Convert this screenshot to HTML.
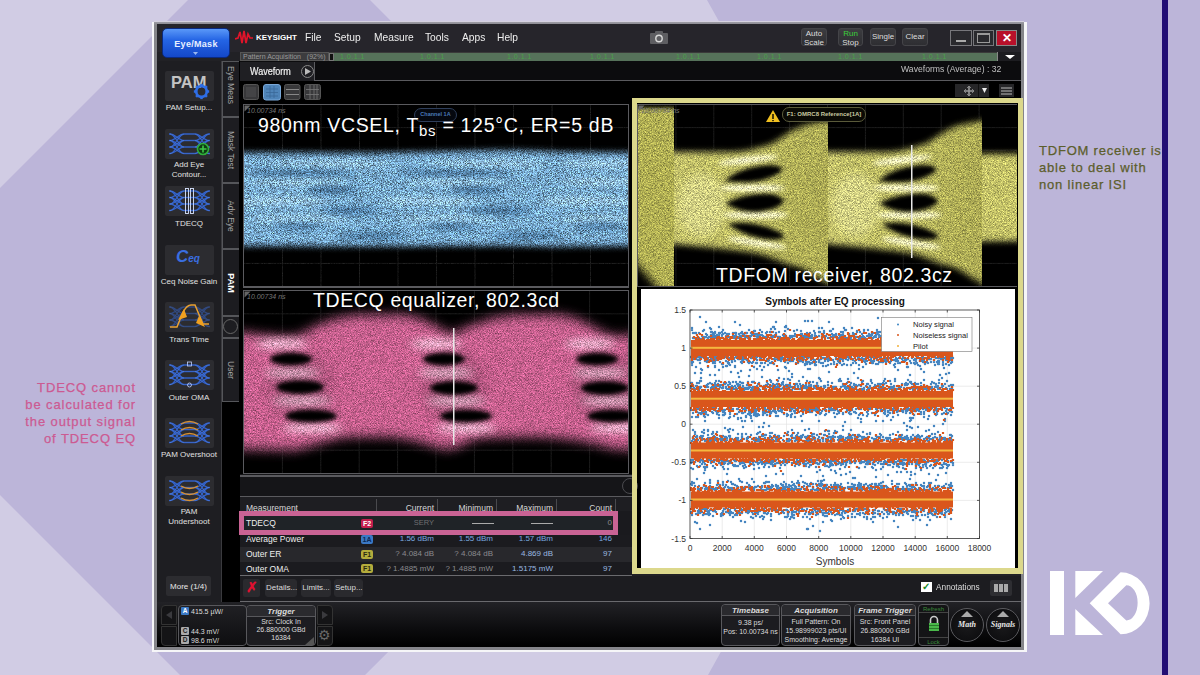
<!DOCTYPE html>
<html><head><meta charset="utf-8">
<style>
*{margin:0;padding:0;box-sizing:border-box}
html,body{width:1200px;height:675px;overflow:hidden;background:#bcb5d9;font-family:"Liberation Sans",sans-serif}
.a{position:absolute}
.t{position:absolute;white-space:nowrap;line-height:1}
.sx{display:inline-block;transform-origin:0 0}
.ib{position:absolute;left:165px;width:49px;height:30px;background:#2c2c30;border-radius:2px}
.lbl{position:absolute;left:157px;width:64px;text-align:center;color:#e0e0e0;font-size:8px;line-height:10px;white-space:nowrap}
.btn{position:absolute;background:linear-gradient(#3c3c40,#2e2e32);border-radius:3px;border:1px solid #444448;color:#ddd;font-size:8px;text-align:center;line-height:9px}
.vt{position:absolute;left:222px;width:17px;border:1px solid #55565a;border-right:none;background:#1d1d21}
.vtx{position:absolute;left:50%;top:50%;transform:translate(-50%,-50%) rotate(90deg);color:#a4a4a4;font-size:8.5px;white-space:nowrap}
.cell{position:absolute;font-size:9px;color:#e0e0e0;white-space:nowrap;line-height:1}
.badge{position:absolute;width:12px;height:9px;border-radius:2px;font-size:7px;font-weight:bold;text-align:center;line-height:9px}
.sp{position:absolute;background:#1c1c20;border:1px solid #58585c;border-radius:4px;color:#ddd;font-size:7px;text-align:center}
.sph{height:11px;border-bottom:1px solid #58585c;font-style:italic;font-weight:bold;font-size:8px;line-height:11px;color:#ddd;background:#2a2a2e;border-radius:4px 4px 0 0}
</style></head><body>
<svg class="a" style="left:0;top:0" width="1200" height="675" viewBox="0 0 1200 675">
  <rect width="1200" height="675" fill="#bcb5d9"/>
  <polygon points="0,0 188,0 0,188" fill="#d1cce4"/>
  <polygon points="0,675 180,675 0,495" fill="#d1cce4"/>
  <polygon points="370,0 707,0 896,337 708,675 365,675 705,336" fill="#d1cce4"/>
  <rect x="1162" y="0" width="6" height="675" fill="#220e74"/>
</svg>

<!-- window frame -->
<div class="a" style="left:152px;top:22px;width:875px;height:630px;background:#f6f6f8"></div>
<div class="a" style="left:154px;top:21px;width:870px;height:2px;background:#d6d2e0"></div>
<div class="a" style="left:154px;top:22px;width:870px;height:628px;background:linear-gradient(#9e9ca6,#85858a 3px)"></div>
<div class="a" style="left:157px;top:24px;width:864px;height:623px;background:#212125"></div>
<div class="a" style="left:157px;top:24px;width:864px;height:28px;background:#26252b"></div>
<!-- top bar -->
<div class="a" style="left:162px;top:28px;width:68px;height:30px;border-radius:5px;background:linear-gradient(#5a98f8,#2464e4 40%,#1448c8);border:1px solid #0a2a80"></div>
<div class="t" style="left:162px;top:40px;width:68px;text-align:center;color:#e8f0ff;font-size:9px;font-weight:bold;letter-spacing:0.3px">Eye/Mask</div><svg class="a" style="left:193px;top:52px" width="5" height="3"><polygon points="0,0 5,0 2.5,3" fill="#9ab8f0"/></svg>

<svg class="a" style="left:235px;top:30px" width="18" height="15" viewBox="0 0 18 15"><polyline points="0,9 3,8 5,2 7,13 9,1 11,13 13,4 15,8 18,8" fill="none" stroke="#e0142a" stroke-width="1.7"/></svg>
<div class="t" style="left:256px;top:34px;color:#fff;font-size:8px;font-weight:bold">KEYSIGHT</div>
<div class="t" style="left:305px;top:32px;color:#eee;font-size:11px"><span class="sx" style="transform:scaleX(0.93)">File</span></div>
<div class="t" style="left:334px;top:32px;color:#eee;font-size:11px"><span class="sx" style="transform:scaleX(0.93)">Setup</span></div>
<div class="t" style="left:374px;top:32px;color:#eee;font-size:11px"><span class="sx" style="transform:scaleX(0.93)">Measure</span></div>
<div class="t" style="left:425px;top:32px;color:#eee;font-size:11px"><span class="sx" style="transform:scaleX(0.93)">Tools</span></div>
<div class="t" style="left:462px;top:32px;color:#eee;font-size:11px"><span class="sx" style="transform:scaleX(0.93)">Apps</span></div>
<div class="t" style="left:497px;top:32px;color:#eee;font-size:11px"><span class="sx" style="transform:scaleX(0.93)">Help</span></div>

<svg class="a" style="left:649px;top:29px" width="20" height="16" viewBox="0 0 20 16"><rect x="1" y="4" width="18" height="11" rx="1" fill="#5e5e62"/><rect x="6" y="2" width="8" height="3" rx="1" fill="#5e5e62"/><circle cx="10" cy="9.5" r="3.2" fill="none" stroke="#d8d8d8" stroke-width="1.4"/></svg>

<div class="btn" style="left:801px;top:28px;width:26px;height:18px">Auto<br>Scale</div>
<div class="btn" style="left:838px;top:28px;width:25px;height:18px"><span style="color:#3ad23a">Run</span><br>Stop</div>
<div class="btn" style="left:870px;top:28px;width:26px;height:18px;line-height:16px">Single</div>
<div class="btn" style="left:902px;top:28px;width:26px;height:18px;line-height:16px">Clear</div>
<div class="a" style="left:950px;top:30px;width:22px;height:16px;border:1px solid #77777b;background:#2a2a2e"></div>
<div class="a" style="left:956px;top:40px;width:10px;height:2px;background:#aaa"></div>
<div class="a" style="left:973px;top:30px;width:21px;height:16px;border:1px solid #77777b;background:#2a2a2e"></div>
<div class="a" style="left:977px;top:33px;width:13px;height:10px;border:1px solid #999;border-top-width:2px"></div>
<div class="a" style="left:996px;top:30px;width:21px;height:16px;border:1px solid #888;background:#b8102a"></div>
<div class="t" style="left:996px;top:32px;width:21px;text-align:center;color:#fff;font-size:12px;font-weight:bold">✕</div>

<!-- pattern acquisition bar -->
<div class="a" style="left:240px;top:52px;width:781px;height:9px;background:#56725a;border-top:1px solid #3a3a3a"></div>
<div class="a" style="left:240px;top:52px;width:89px;height:9px;background:#3c3c3e;border:1px solid #555"></div>
<div class="a" style="left:329px;top:53px;width:5px;height:8px;background:#111;border:1px solid #777"></div>
<div class="t" style="left:243px;top:53px;color:#9a9a9a;font-size:7px">Pattern Acquisition&nbsp;&nbsp;&nbsp;(92%)</div>
<div class="t" style="left:340px;top:53px;color:#4aa04a;font-size:7px;letter-spacing:0.5px">1.0.1.1</div><div class="t" style="left:420px;top:53px;color:#4aa04a;font-size:7px;letter-spacing:0.5px">1.0.1.1</div><div class="t" style="left:507px;top:53px;color:#4aa04a;font-size:7px;letter-spacing:0.5px">1.0.1.1</div><div class="t" style="left:590px;top:53px;color:#4aa04a;font-size:7px;letter-spacing:0.5px">1.0.1.1</div><div class="t" style="left:676px;top:53px;color:#4aa04a;font-size:7px;letter-spacing:0.5px">1.0.1.1</div><div class="t" style="left:757px;top:53px;color:#4aa04a;font-size:7px;letter-spacing:0.5px">1.0.1.1</div><div class="t" style="left:838px;top:53px;color:#4aa04a;font-size:7px;letter-spacing:0.5px">1.0.1.1</div><div class="t" style="left:922px;top:53px;color:#4aa04a;font-size:7px;letter-spacing:0.5px">1.0.1.1</div>
<div class="a" style="left:997px;top:52px;width:24px;height:9px;background:#1c1c20;border-left:1px solid #888"></div>
<svg class="a" style="left:1005px;top:55px" width="10" height="4"><polygon points="0,0 10,0 5,4" fill="#fff"/></svg>
<!-- waveform tab row -->
<div class="a" style="left:240px;top:61px;width:781px;height:20px;background:#0c0c0e"></div>
<div class="a" style="left:240px;top:80px;width:781px;height:1px;background:#5a5a5e"></div>
<div class="a" style="left:240px;top:62px;width:75px;height:19px;background:#1f1f23;border-right:1px solid #5a5a5e"></div>
<div class="t" style="left:250px;top:67px;color:#f0f0f0;font-size:10px;-webkit-text-stroke:0.2px #f0f0f0"><span class="sx" style="transform:scaleX(0.9)">Waveform</span></div>
<div class="a" style="left:301px;top:65px;width:13px;height:13px;border-radius:50%;border:1px solid #888"></div>
<svg class="a" style="left:305px;top:68px" width="6" height="7"><polygon points="0,0 6,3.5 0,7" fill="#bbb"/></svg>
<div class="t" style="left:901px;top:65px;color:#c0c0c0;font-size:9px"><span class="sx" style="transform:scaleX(0.96)">Waveforms (Average) : 32</span></div>

<!-- toolbar row -->
<div class="a" style="left:240px;top:81px;width:781px;height:20px;background:#000"></div>
<svg class="a" style="left:242px;top:83px" width="80" height="18" viewBox="242 83 80 18">
 <rect x="243.5" y="84.5" width="15" height="15" rx="2" fill="#38383a" stroke="#555" stroke-width="1"/>
 <rect x="246" y="87" width="10" height="10" fill="#444446"/>
 <rect x="263.5" y="84.5" width="17" height="15.5" rx="2.5" fill="#4f84b8" stroke="#7aa8d8" stroke-width="1"/>
 <path d="M266 89H278M266 92.5H278M266 96H278M270 86V98M274 86V98" stroke="#3a6898" stroke-width="0.8"/>
 <rect x="284.5" y="84.5" width="15.5" height="15" rx="2" fill="#38383a" stroke="#555" stroke-width="1"/>
 <path d="M286 89.5H299M286 94.5H299" stroke="#888" stroke-width="1"/>
 <rect x="304.5" y="84.5" width="16" height="15" rx="2" fill="#38383a" stroke="#555" stroke-width="1"/>
 <path d="M306 89.5H319M306 94.5H319M310 85V99M314 85V99M317 85V99" stroke="#777" stroke-width="0.8"/>
</svg>
<svg class="a" style="left:954px;top:83px" width="62" height="15" viewBox="954 83 62 15">
 <rect x="955" y="84" width="34" height="13" fill="#262628"/>
 <line x1="978.5" y1="84" x2="978.5" y2="97" stroke="#111" stroke-width="1"/>
 <path d="M969 86.5V95.5M964.5 91H973.5" stroke="#999" stroke-width="1.6"/><path d="M967 88l2-2 2 2M967 94l2 2 2-2M966 89l-2 2 2 2M972 89l2 2-2 2" stroke="#999" stroke-width="0.8" fill="none"/>
 <polygon points="982,88 987,88 984.5,93" fill="#eee"/>
 <rect x="999" y="84" width="15" height="13" fill="#262628"/>
 <path d="M1001 88H1012M1001 91H1012M1001 94H1012" stroke="#bbb" stroke-width="1"/>
</svg>
<!-- left sidebar -->
<div class="a" style="left:157px;top:61px;width:65px;height:541px;background:#1e1e22;border-right:1px solid #3a3a3e"></div>
<div class="ib" style="top:71px"></div>
<div class="t" style="left:171px;top:74px;color:#c4c4c4;font-size:16.5px;font-weight:bold">PAM</div>
<div class="lbl" style="top:103px">PAM Setup...</div>
<div class="ib" style="top:129px"></div>
<div class="lbl" style="top:160px">Add Eye<br>Contour...</div>
<div class="ib" style="top:186px"></div>
<div class="lbl" style="top:219px">TDECQ</div>
<div class="ib" style="top:245px"></div>
<div class="t" style="left:176px;top:248px;color:#3a6ee0;font-size:17px;font-weight:bold;font-style:italic">C<span style="font-size:10px">eq</span></div>
<div class="lbl" style="top:277px">Ceq Noise Gain</div>
<div class="ib" style="top:302px"></div>
<div class="lbl" style="top:335px">Trans Time</div>
<div class="ib" style="top:360px"></div>
<div class="lbl" style="top:393px">Outer OMA</div>
<div class="ib" style="top:418px"></div>
<div class="lbl" style="top:450px">PAM Overshoot</div>
<div class="ib" style="top:476px"></div>
<div class="lbl" style="top:507px">PAM<br>Undershoot</div>
<div class="a" style="left:166px;top:576px;width:45px;height:20px;background:#2c2c30;border-radius:2px"></div>
<div class="t" style="left:166px;top:583px;width:45px;text-align:center;color:#e8e8e8;font-size:8px">More (1/4)</div>

<!-- vertical tabs column -->
<div class="a" style="left:222px;top:61px;width:18px;height:541px;background:#000"></div>
<div class="vt" style="top:61px;height:56px"><div class="vtx" style="top:42%">Eye Meas</div></div>
<div class="vt" style="top:117px;height:66px"><div class="vtx">Mask Test</div></div>
<div class="vt" style="top:183px;height:66px"><div class="vtx">Adv Eye</div></div>
<div class="vt" style="top:249px;height:67px;background:#1c1c20"><div class="vtx" style="color:#fff;font-weight:bold;font-size:9px">PAM</div></div>
<div class="vt" style="top:316px;height:22px"></div>
<div class="a" style="left:223px;top:319px;width:15px;height:15px;border-radius:50%;border:1px solid #666"></div>
<div class="vt" style="top:338px;height:64px"><div class="vtx">User</div></div>

<!-- panel frames -->
<div class="a" style="left:240px;top:101px;width:392px;height:374px;background:#000"></div>
<div class="a" style="left:243px;top:104px;width:386px;height:184px;border:1px solid #5a5a5e;border-bottom-width:2px;background:#000"></div>
<div class="a" style="left:243px;top:290px;width:386px;height:184px;border:1px solid #5a5a5e;background:#000"></div>
<div class="a" style="left:632px;top:98px;width:391px;height:476px;background:#dcd88c"></div>
<div class="a" style="left:637px;top:103px;width:381px;height:465px;background:#000"></div>
<div class="a" style="left:637px;top:104px;width:380px;height:183px;border:1px solid #5a5a5e"></div>

<svg class="a" style="left:0;top:0" width="0" height="0">
 <defs>
  <g id="eyeic"><path d="M5.0 5.0C10.0 5.0 14.0 11.5 19.0 11.5M5.0 5.0C10.0 5.0 14.0 18.0 19.0 18.0M5.0 11.5C10.0 11.5 14.0 5.0 19.0 5.0M5.0 11.5C10.0 11.5 14.0 18.0 19.0 18.0M5.0 11.5C10.0 11.5 14.0 24.5 19.0 24.5M5.0 18.0C10.0 18.0 14.0 5.0 19.0 5.0M5.0 18.0C10.0 18.0 14.0 11.5 19.0 11.5M5.0 18.0C10.0 18.0 14.0 24.5 19.0 24.5M5.0 24.5C10.0 24.5 14.0 11.5 19.0 11.5M5.0 24.5C10.0 24.5 14.0 18.0 19.0 18.0M30.0 5.0C35.0 5.0 39.0 11.5 44.0 11.5M30.0 5.0C35.0 5.0 39.0 18.0 44.0 18.0M30.0 11.5C35.0 11.5 39.0 5.0 44.0 5.0M30.0 11.5C35.0 11.5 39.0 18.0 44.0 18.0M30.0 11.5C35.0 11.5 39.0 24.5 44.0 24.5M30.0 18.0C35.0 18.0 39.0 5.0 44.0 5.0M30.0 18.0C35.0 18.0 39.0 11.5 44.0 11.5M30.0 18.0C35.0 18.0 39.0 24.5 44.0 24.5M30.0 24.5C35.0 24.5 39.0 11.5 44.0 11.5M30.0 24.5C35.0 24.5 39.0 18.0 44.0 18.0M4 5.0H6M19 5.0H30M44 5.0H45M4 11.5H6M19 11.5H30M44 11.5H45M4 18.0H6M19 18.0H30M44 18.0H45M4 24.5H6M19 24.5H30M44 24.5H45" fill="none" stroke="#2858c8" stroke-width="1.3" opacity="0.9"/><path d="M5.0 5.0C10.0 5.0 14.0 11.5 19.0 11.5M5.0 5.0C10.0 5.0 14.0 18.0 19.0 18.0M5.0 11.5C10.0 11.5 14.0 5.0 19.0 5.0M5.0 11.5C10.0 11.5 14.0 18.0 19.0 18.0M5.0 11.5C10.0 11.5 14.0 24.5 19.0 24.5M5.0 18.0C10.0 18.0 14.0 5.0 19.0 5.0M5.0 18.0C10.0 18.0 14.0 11.5 19.0 11.5M5.0 18.0C10.0 18.0 14.0 24.5 19.0 24.5M5.0 24.5C10.0 24.5 14.0 11.5 19.0 11.5M5.0 24.5C10.0 24.5 14.0 18.0 19.0 18.0M30.0 5.0C35.0 5.0 39.0 11.5 44.0 11.5M30.0 5.0C35.0 5.0 39.0 18.0 44.0 18.0M30.0 11.5C35.0 11.5 39.0 5.0 44.0 5.0M30.0 11.5C35.0 11.5 39.0 18.0 44.0 18.0M30.0 11.5C35.0 11.5 39.0 24.5 44.0 24.5M30.0 18.0C35.0 18.0 39.0 5.0 44.0 5.0M30.0 18.0C35.0 18.0 39.0 11.5 44.0 11.5M30.0 18.0C35.0 18.0 39.0 24.5 44.0 24.5M30.0 24.5C35.0 24.5 39.0 11.5 44.0 11.5M30.0 24.5C35.0 24.5 39.0 18.0 44.0 18.0M4 5.0H6M19 5.0H30M44 5.0H45M4 11.5H6M19 11.5H30M44 11.5H45M4 18.0H6M19 18.0H30M44 18.0H45M4 24.5H6M19 24.5H30M44 24.5H45" fill="none" stroke="#6fa4ff" stroke-width="0.45" opacity="0.5"/></g>
 </defs>
</svg>
<!-- PAM setup icon -->
<svg class="a" style="left:193px;top:83px" width="17" height="17" viewBox="0 0 20 20">
 <g transform="translate(10 10)">
  <circle r="6.2" fill="none" stroke="#2f6ee6" stroke-width="3.2"/>
  <g fill="#2f6ee6"><rect x="-1.5" y="-9" width="3" height="3"/><rect x="-1.5" y="6" width="3" height="3"/><rect x="-9" y="-1.5" width="3" height="3"/><rect x="6" y="-1.5" width="3" height="3"/>
  <rect x="-1.5" y="-9" width="3" height="3" transform="rotate(45)"/><rect x="-1.5" y="6" width="3" height="3" transform="rotate(45)"/><rect x="-9" y="-1.5" width="3" height="3" transform="rotate(45)"/><rect x="6" y="-1.5" width="3" height="3" transform="rotate(45)"/></g>
 </g>
</svg>
<!-- add eye contour -->
<svg class="a" style="left:165px;top:129px" width="49" height="30" viewBox="0 0 49 30"><use href="#eyeic"/><circle cx="38" cy="20" r="5.5" fill="#0e3a12" stroke="#2fae3a" stroke-width="1.6"/><path d="M38 16.5v7M34.5 20h7" stroke="#3cc848" stroke-width="1.6"/></svg>
<!-- TDECQ -->
<svg class="a" style="left:165px;top:186px" width="49" height="30" viewBox="0 0 49 30"><use href="#eyeic"/><rect x="20.5" y="2.5" width="3" height="25" fill="none" stroke="#d8e4ff" stroke-width="0.9"/><rect x="25.5" y="2.5" width="3" height="25" fill="none" stroke="#d8e4ff" stroke-width="0.9"/></svg>
<!-- Trans time -->
<svg class="a" style="left:165px;top:302px" width="49" height="30" viewBox="0 0 49 30"><use href="#eyeic" opacity="0.5"/><path d="M5 25 H12 L18 10 Q22 3 26 3 H30 L38 22 H44" fill="none" stroke="#e8a030" stroke-width="1.5"/><path d="M13 18 L19 7 L22 15 Z" fill="#f0a020"/><path d="M34 14 L40 25 L31 21 Z" fill="#f0a020"/></svg>
<!-- Outer OMA -->
<svg class="a" style="left:165px;top:360px" width="49" height="30" viewBox="0 0 49 30"><use href="#eyeic"/><rect x="22.5" y="2" width="4" height="4" fill="none" stroke="#c0d0ff" stroke-width="0.8"/><circle cx="24.5" cy="25" r="2" fill="none" stroke="#c0d0ff" stroke-width="0.8"/></svg>
<!-- PAM overshoot -->
<svg class="a" style="left:165px;top:418px" width="49" height="30" viewBox="0 0 49 30"><use href="#eyeic"/><path d="M16 6 Q24.5 1 33 6 M16 12 Q24.5 7 33 12 M16 18 Q24.5 13 33 18" fill="none" stroke="#d89030" stroke-width="1.3"/></svg>
<!-- PAM undershoot -->
<svg class="a" style="left:165px;top:476px" width="49" height="30" viewBox="0 0 49 30"><use href="#eyeic"/><path d="M16 10 Q24.5 15 33 10 M16 16 Q24.5 21 33 16 M16 22 Q24.5 27 33 22" fill="none" stroke="#d89030" stroke-width="1.3"/></svg>
<svg class="a" style="left:0;top:0" width="0" height="0">
<defs>
 <filter id="gr" x="0" y="0" width="1" height="1" color-interpolation-filters="sRGB">
  <feTurbulence type="fractalNoise" baseFrequency="1.4" numOctaves="1" seed="5" result="t"/>
  <feColorMatrix in="t" type="matrix" values="1 0 0 0 0 1 0 0 0 0 1 0 0 0 0 0 0 0 0 1" result="g0"/>
  <feGaussianBlur in="g0" stdDeviation="0.5" result="g"/>
  <feComposite in="SourceGraphic" in2="g" operator="arithmetic" k1="2.2" k2="-0.1" k3="0" k4="0"/>
 </filter>
 <filter id="gr2" x="0" y="0" width="1" height="1" color-interpolation-filters="sRGB">
  <feTurbulence type="fractalNoise" baseFrequency="1.4" numOctaves="1" seed="7" result="t"/>
  <feColorMatrix in="t" type="matrix" values="1 0 0 0 0 1 0 0 0 0 1 0 0 0 0 0 0 0 0 1" result="g0"/>
  <feGaussianBlur in="g0" stdDeviation="0.5" result="g"/>
  <feComposite in="SourceGraphic" in2="g" operator="arithmetic" k1="1.3" k2="0.35" k3="0" k4="0"/>
 </filter>
 <filter id="b6" x="-20%" y="-50%" width="140%" height="200%"><feGaussianBlur stdDeviation="6"/></filter>
 <filter id="b2" x="-20%" y="-20%" width="140%" height="140%"><feGaussianBlur stdDeviation="2"/></filter>
 <filter id="b5" x="-20%" y="-40%" width="140%" height="180%"><feGaussianBlur stdDeviation="4.5"/></filter>
 <filter id="b4" x="-50%" y="-50%" width="200%" height="200%"><feGaussianBlur stdDeviation="4"/></filter>
 <filter id="b3" x="-50%" y="-50%" width="200%" height="200%"><feGaussianBlur stdDeviation="3"/></filter>
 <filter id="b25" x="-50%" y="-80%" width="200%" height="260%"><feGaussianBlur stdDeviation="2.3"/></filter>
</defs>
</svg>

<!-- BLUE EYE -->
<svg class="a" style="left:244px;top:105px" width="384" height="181" viewBox="244 105 384 181">
 <g filter="url(#gr)">
  <rect x="244" y="105" width="385" height="181" fill="#000"/><path d="M282.5 105V286M321.0 105V286M359.5 105V286M398.0 105V286M436.5 105V286M475.0 105V286M513.5 105V286M552.0 105V286M590.5 105V286M244 127.6H629M244 150.2H629M244 172.9H629M244 195.5H629M244 218.1H629M244 240.8H629M244 263.4H629" stroke="#1a1a1a" stroke-width="1" fill="none"/>
  <g filter="url(#b3)">
   <path d="M220 153 C300 152 360 154 420 152 C470 151 500 149 540 151 C580 153 610 152 660 153 L660 246 C600 246 560 247 520 246 C460 245 400 247 300 246 L220 246 Z" fill="#74a6cc"/>
  </g>
  <g filter="url(#b3)" fill="#b8dcf2" opacity="0.55">
   <ellipse cx="330" cy="164" rx="60" ry="3"/><ellipse cx="485" cy="164" rx="60" ry="3"/><ellipse cx="600" cy="164" rx="40" ry="3"/>
   <ellipse cx="300" cy="182" rx="50" ry="3"/><ellipse cx="455" cy="182" rx="50" ry="3"/><ellipse cx="600" cy="182" rx="40" ry="3"/>
   <ellipse cx="280" cy="201" rx="50" ry="3.5"/><ellipse cx="430" cy="201" rx="50" ry="3.5"/><ellipse cx="590" cy="201" rx="50" ry="3.5"/>
   <ellipse cx="300" cy="219" rx="50" ry="3"/><ellipse cx="450" cy="219" rx="50" ry="3"/><ellipse cx="600" cy="219" rx="40" ry="3"/>
  </g>
  <g filter="url(#b3)" fill="#1e4468" opacity="0.7">
   <ellipse cx="300" cy="173" rx="55" ry="2.5"/><ellipse cx="455" cy="173" rx="55" ry="2.5"/>
   <ellipse cx="332" cy="190" rx="26" ry="3"/><ellipse cx="477" cy="190" rx="26" ry="3"/>
   <ellipse cx="350" cy="211" rx="28" ry="3"/><ellipse cx="500" cy="211" rx="32" ry="3"/>
   <ellipse cx="298" cy="226" rx="26" ry="2.5"/><ellipse cx="452" cy="226" rx="26" ry="2.5"/><ellipse cx="600" cy="226" rx="26" ry="2.5"/>
   <ellipse cx="372" cy="236" rx="34" ry="2.5"/><ellipse cx="527" cy="236" rx="34" ry="2.5"/>
  </g>
 </g>
</svg>

<!-- PINK EYE -->
<svg class="a" style="left:244px;top:291px" width="384" height="182" viewBox="244 291 384 182">
 <g filter="url(#gr2)">
  <rect x="244" y="291" width="384" height="182" fill="#000"/><path d="M282.4 291V473M320.8 291V473M359.2 291V473M397.6 291V473M436.0 291V473M474.4 291V473M512.8 291V473M551.2 291V473M589.6 291V473M244 313.8H628M244 336.5H628M244 359.2H628M244 382.0H628M244 404.8H628M244 427.5H628M244 450.2H628" stroke="#1a1a1a" stroke-width="1" fill="none"/>
  <g filter="url(#b6)">
   <path d="M220 332 C255 332 275 338 298 336 C318 324 335 316 360 315 L400 315 C425 316 440 330 452 334 C470 326 490 316 520 315 L560 315 C585 318 600 334 615 336 C625 336 640 334 660 334 L660 450 C630 450 612 450 600 445 C580 440 560 437 520 437 L480 438 C468 440 458 450 445 449 C430 446 420 440 390 437 L350 437 C330 438 315 446 295 450 C270 450 250 449 220 449 Z" fill="#c6608e"/>
  </g>
  <g filter="url(#b4)" fill="#f6cce0" opacity="1">
   <ellipse cx="282" cy="344" rx="26" ry="4"/>
   <ellipse cx="292" cy="373" rx="28" ry="4"/>
   <ellipse cx="302" cy="401" rx="30" ry="4"/>
   <ellipse cx="312" cy="428" rx="30" ry="4"/>
   <ellipse cx="436" cy="344" rx="26" ry="4"/>
   <ellipse cx="446" cy="373" rx="28" ry="4"/>
   <ellipse cx="456" cy="401" rx="30" ry="4"/>
   <ellipse cx="466" cy="428" rx="30" ry="4"/>
   <ellipse cx="590" cy="344" rx="26" ry="4"/>
   <ellipse cx="600" cy="373" rx="28" ry="4"/>
   <ellipse cx="610" cy="401" rx="30" ry="4"/>
   <ellipse cx="620" cy="428" rx="30" ry="4"/>
  </g>
  <g filter="url(#b6)" fill="#000" opacity="0.12">
   <ellipse cx="300" cy="387" rx="34" ry="36"/>
   <ellipse cx="454" cy="387" rx="34" ry="36"/>
   <ellipse cx="605" cy="387" rx="34" ry="36"/>
  </g>
  <g filter="url(#b25)" fill="#000">
   <ellipse cx="291" cy="359" rx="21" ry="6.5"/>
   <ellipse cx="300" cy="387" rx="24" ry="7"/>
   <ellipse cx="311" cy="416" rx="26" ry="6.5"/>
   <ellipse cx="444" cy="359" rx="21" ry="6.5"/>
   <ellipse cx="454" cy="388" rx="24" ry="7"/>
   <ellipse cx="466" cy="416" rx="26" ry="6.5"/>
   <ellipse cx="597" cy="359" rx="21" ry="6.5"/>
   <ellipse cx="605" cy="388" rx="24" ry="7"/>
   <ellipse cx="613" cy="416" rx="26" ry="6.5"/>
  </g>
 </g>
 <rect x="453" y="328" width="1.5" height="117" fill="#e8e8e8"/>
</svg>

<!-- YELLOW EYE -->
<svg class="a" style="left:638px;top:105px" width="379" height="181" viewBox="638 105 379 181">
 <defs>
  <linearGradient id="hg" x1="0" x2="1" y1="0" y2="0">
   <stop offset="0" stop-color="#c6c46e"/><stop offset="0.4" stop-color="#bcba62"/><stop offset="1" stop-color="#a8a650"/>
  </linearGradient>
  <clipPath id="hc"><rect x="674" y="100" width="154" height="190"/></clipPath>
  <g id="ygrp">
   <g clip-path="url(#hc)">
    <g filter="url(#b3)">
     <path d="M650 152 L735 152 C748 151 760 148 772 143.5 C780 139 785 135 790 132 C797 128 803 125.5 808 124.5 C815 123 820 122 827 121 L850 119 L850 295 L840 289 C828 284 818 278 805 269.5 C797 266 792 265 787.5 264 C780 261 776 259 772 258 C765 255 760 254 750 252 C735 250 710 247 650 241.5 Z" fill="url(#hg)"/>
    </g>
   </g>
   <g filter="url(#b25)" fill="#f8f6c8">
    <ellipse cx="748" cy="160" rx="30" ry="3.2" transform="rotate(-7 748 160)"/>
    <ellipse cx="752" cy="188" rx="33" ry="3.5"/>
    <ellipse cx="755" cy="215" rx="33" ry="3.5"/>
    <ellipse cx="757" cy="243" rx="30" ry="3.2" transform="rotate(9 757 243)"/>
   </g>
   <g filter="url(#b4)" fill="#e6e4a0" opacity="0.5">
    <ellipse cx="702" cy="205" rx="24" ry="32"/>
   </g>
   <g filter="url(#b2)" fill="#000">
    <path d="M724 181 Q742 166 770 165 Q786 166 781 172 Q760 186 724 181 Z"/>
    <path d="M725 203 Q748 192 772 194 Q786 198 783 203 Q776 210 756 212 Q738 212 725 203 Z"/>
    <path d="M728 224 Q745 220 770 228 Q786 234 784 238 Q770 242 752 236 Q738 232 728 224 Z"/>
   </g>
  </g>
 </defs>
 <g filter="url(#gr2)">
  <rect x="638" y="105" width="379" height="181" fill="#000"/><path d="M675.9 105V286M713.8 105V286M751.7 105V286M789.6 105V286M827.5 105V286M865.4 105V286M903.3 105V286M941.2 105V286M979.1 105V286M638 127.6H1017M638 150.2H1017M638 172.9H1017M638 195.5H1017M638 218.1H1017M638 240.8H1017M638 263.4H1017" stroke="#1a1a1a" stroke-width="1" fill="none"/>
  <g clip-path="url(#lc)">
   <g filter="url(#b2)">
    <rect x="620" y="108" width="70" height="190" fill="#b0ae52"/>
   </g>
   <g filter="url(#b4)"><polygon points="625,250 625,300 668,300" fill="#000"/></g>
  </g>
  <use href="#ygrp"/>
  <use href="#ygrp" transform="translate(154 0)"/>
  <g clip-path="url(#rc)">
   <g filter="url(#b3)">
    <rect x="970" y="154" width="60" height="87" fill="#c4c268"/>
   </g>
  </g>
 </g>
 <defs>
  <clipPath id="lc"><rect x="630" y="100" width="44" height="190"/></clipPath>
  <clipPath id="rc"><rect x="982" y="100" width="40" height="190"/></clipPath>
 </defs>
 <rect x="911" y="145" width="1.5" height="113" fill="#e8e8e8"/>
</svg>
<!-- PLOT -->
<svg class="a" style="left:641px;top:289px" width="374" height="279" viewBox="641 289 374 279">
 <defs><clipPath id="axc"><rect x="690" y="310" width="289.5" height="228.5"/></clipPath></defs>
 <rect x="641" y="289" width="374" height="279" fill="#fff"/>
 <path d="M722.2 310V538.5M754.3 310V538.5M786.5 310V538.5M818.7 310V538.5M850.8 310V538.5M883.0 310V538.5M915.2 310V538.5M947.3 310V538.5M690 348.1H979.5M690 386.2H979.5M690 424.2H979.5M690 462.3H979.5M690 500.4H979.5" stroke="#e4e4e4" stroke-width="0.7" fill="none"/>
 <g clip-path="url(#axc)">
  <path d="M887 337h0M845 339h0M717 336h0M878 332h0M905 358h0M808 358h0M947 360h0M898 337h0M874 337h0M830 359h0M822 334h0M812 338h0M851 365h0M785 367h0M854 336h0M694 338h0M858 359h0M793 359h0M933 338h0M942 332h0M886 359h0M759 335h0M734 338h0M896 359h0M808 321h0M771 329h0M723 338h0M895 364h0M826 366h0M696 338h0M763 336h0M873 333h0M776 333h0M853 360h0M953 358h0M852 328h0M741 362h0M720 362h0M870 335h0M788 338h0M833 360h0M920 360h0M747 333h0M741 371h0M762 370h0M700 317h0M803 362h0M711 359h0M694 359h0M851 359h0M701 357h0M740 325h0M776 322h0M829 372h0M815 335h0M857 332h0M700 360h0M725 333h0M872 333h0M872 361h0M692 365h0M815 364h0M766 333h0M941 359h0M880 332h0M951 337h0M908 359h0M917 363h0M719 333h0M702 336h0M723 334h0M890 326h0M938 358h0M824 331h0M712 360h0M798 363h0M889 358h0M700 363h0M876 364h0M900 363h0M877 359h0M713 338h0M806 363h0M948 337h0M693 338h0M764 367h0M921 338h0M803 337h0M878 360h0M922 361h0M945 358h0M793 358h0M947 337h0M823 337h0M775 359h0M692 362h0M751 333h0M804 357h0M825 361h0M809 357h0M705 361h0M738 359h0M815 338h0M934 334h0M700 358h0M807 337h0M910 331h0M738 358h0M789 360h0M850 337h0M728 363h0M770 363h0M775 329h0M941 338h0M780 358h0M912 336h0M939 332h0M756 363h0M832 337h0M873 338h0M713 333h0M741 333h0M750 336h0M845 338h0M746 336h0M726 361h0M816 365h0M730 359h0M785 338h0M816 336h0M856 363h0M713 363h0M866 357h0M806 361h0M815 360h0M805 365h0M786 360h0M920 339h0M836 335h0M711 332h0M866 364h0M786 368h0M839 362h0M726 336h0M744 358h0M834 362h0M894 365h0M757 334h0M938 361h0M839 357h0M950 359h0M881 358h0M833 335h0M907 367h0M843 359h0M866 358h0M706 334h0M942 328h0M888 336h0M742 361h0M698 360h0M877 332h0M701 357h0M777 357h0M830 331h0M838 361h0M901 338h0M746 333h0M743 336h0M738 357h0M828 361h0M835 337h0M804 359h0M828 365h0M905 359h0M844 358h0M729 337h0M843 332h0M931 336h0M735 367h0M911 331h0M876 357h0M803 336h0M794 336h0M853 363h0M740 338h0M749 363h0M757 357h0M785 359h0M917 337h0M703 357h0M729 334h0M780 337h0M792 358h0M872 357h0M845 330h0M695 373h0M909 337h0M732 337h0M726 337h0M692 363h0M843 337h0M822 336h0M727 366h0M692 363h0M779 339h0M808 358h0M727 337h0M892 335h0M714 359h0M717 358h0M845 337h0M790 358h0M787 357h0M692 361h0M754 331h0M707 335h0M915 338h0M874 361h0M755 334h0M952 336h0M848 338h0M810 363h0M718 360h0M768 365h0M715 363h0M943 362h0M839 338h0M771 337h0M843 361h0M767 332h0M803 357h0M906 338h0M914 363h0M794 359h0M773 332h0M903 335h0M913 337h0M716 337h0M714 357h0M910 336h0M860 339h0M715 333h0M740 336h0M710 375h0M936 358h0M870 338h0M729 358h0M875 336h0M891 336h0M887 359h0M713 337h0M934 339h0M848 360h0M843 335h0M903 358h0M714 335h0M928 337h0M948 338h0M708 358h0M805 338h0M921 358h0M865 362h0M735 337h0M704 337h0M824 332h0M821 357h0M784 358h0M942 358h0M923 335h0M837 364h0M706 337h0M871 337h0M900 337h0M767 339h0M767 360h0M907 364h0M697 357h0M934 362h0M733 336h0M876 335h0M799 361h0M916 361h0M813 362h0M720 339h0M784 337h0M869 336h0M841 358h0M943 364h0M775 335h0M801 334h0M727 334h0M885 358h0M804 337h0M818 357h0M755 331h0M732 361h0M754 367h0M885 334h0M703 337h0M755 336h0M706 358h0M819 360h0M752 335h0M819 332h0M921 369h0M843 338h0M887 360h0M737 338h0M701 339h0M824 358h0M951 363h0M879 357h0M708 360h0M856 337h0M782 357h0M931 335h0M725 357h0M790 380h0M775 357h0M931 362h0M891 361h0M804 339h0M929 359h0M748 362h0M898 361h0M810 337h0M948 337h0M949 357h0M715 332h0M862 359h0M885 361h0M774 327h0M696 339h0M760 360h0M896 361h0M764 359h0M735 361h0M842 337h0M897 359h0M746 337h0M857 337h0M936 336h0M903 361h0M751 336h0M889 333h0M763 357h0M859 357h0M831 337h0M699 357h0M854 334h0M743 360h0M791 361h0M938 364h0M728 337h0M775 336h0M947 358h0M949 334h0M946 364h0M936 333h0M788 338h0M849 334h0M707 360h0M728 358h0M865 362h0M779 332h0M758 334h0M891 331h0M930 359h0M922 336h0M877 360h0M731 359h0M920 361h0M768 361h0M738 337h0M728 358h0M920 360h0M745 359h0M696 359h0M811 360h0M950 332h0M884 331h0M926 339h0M829 335h0M909 333h0M876 364h0M749 361h0M864 361h0M924 334h0M814 331h0M808 362h0M726 366h0M788 360h0M732 361h0M777 359h0M810 338h0M806 338h0M786 326h0M785 331h0M827 359h0M736 335h0M747 360h0M865 362h0M839 335h0M841 332h0M893 336h0M799 359h0M883 362h0M750 338h0M872 335h0M904 338h0M933 331h0M949 365h0M904 330h0M698 339h0M815 336h0M785 362h0M715 366h0M793 357h0M891 335h0M774 337h0M699 338h0M807 358h0M883 338h0M731 372h0M744 334h0M849 334h0M949 373h0M937 362h0M735 333h0M722 364h0M838 360h0M708 367h0M891 329h0M873 363h0M946 333h0M853 359h0M938 323h0M822 338h0M768 360h0M815 365h0M902 334h0M934 337h0M762 363h0M799 361h0M723 364h0M821 363h0M883 335h0M771 332h0M707 362h0M826 336h0M735 336h0M810 369h0M722 332h0M757 338h0M777 357h0M832 334h0M700 359h0M872 334h0M837 338h0M904 338h0M713 337h0M739 359h0M862 334h0M851 337h0M882 362h0M916 359h0M944 336h0M692 330h0M776 336h0M860 338h0M713 362h0M864 332h0M707 359h0M887 361h0M951 357h0M728 357h0M876 337h0M923 336h0M804 359h0M800 360h0M845 337h0M815 336h0M712 336h0M945 328h0M747 360h0M859 339h0M779 338h0M910 337h0M934 334h0M720 333h0M699 333h0M805 364h0M878 364h0M862 358h0M742 363h0M896 337h0M891 358h0M879 337h0M851 339h0M735 366h0M869 335h0M891 357h0M915 359h0M734 359h0M712 332h0M739 334h0M935 337h0M812 363h0M715 367h0M890 358h0M824 333h0M895 338h0M769 358h0M704 338h0M841 336h0M698 337h0M722 335h0M742 332h0M812 335h0M874 357h0M949 335h0M816 362h0M819 361h0M846 338h0M888 338h0M944 338h0M717 338h0M833 329h0M850 338h0M829 322h0M935 365h0M952 327h0M767 359h0M730 365h0M735 322h0M899 337h0M750 362h0M851 336h0M905 361h0M719 327h0M809 357h0M701 373h0M790 361h0M918 358h0M799 358h0M760 366h0M917 357h0M807 358h0M870 360h0M718 339h0M807 364h0M902 338h0M797 359h0M849 336h0M939 362h0M786 339h0M802 357h0M783 335h0M722 337h0M805 335h0M863 336h0M909 339h0M947 358h0M862 337h0M801 361h0M743 334h0M782 359h0M831 337h0M729 363h0M716 358h0M711 335h0M890 358h0M792 337h0M695 358h0M923 362h0M936 337h0M893 338h0M743 359h0M819 362h0M754 357h0M787 360h0M706 322h0M728 362h0M944 368h0M844 328h0M756 358h0M774 359h0M823 366h0M943 357h0M953 336h0M790 338h0M913 337h0M798 357h0M881 336h0M717 335h0M878 334h0M904 334h0M833 360h0M853 359h0M836 336h0M853 335h0M797 330h0M760 357h0M782 358h0M943 362h0M951 358h0M935 337h0M863 359h0M846 330h0M744 358h0M879 362h0M862 358h0M819 328h0M842 359h0M886 362h0M741 337h0M904 332h0M774 364h0M922 357h0M885 357h0M810 364h0M757 369h0M869 335h0M735 338h0M788 329h0M843 334h0M937 362h0M924 338h0M779 337h0M806 336h0M864 330h0M757 338h0M794 331h0M775 361h0M799 358h0M880 362h0M858 358h0M807 333h0M804 336h0M918 365h0M898 334h0M823 334h0M716 360h0M791 361h0M947 337h0M732 359h0M784 339h0M900 336h0M799 361h0M898 370h0M939 358h0M834 364h0M704 358h0M903 337h0M757 336h0M915 364h0M950 338h0M902 337h0M723 367h0M893 338h0M814 360h0M855 338h0M893 334h0M760 330h0M871 357h0M842 365h0M693 333h0M778 360h0M703 331h0M761 363h0M923 359h0M759 337h0M928 363h0M790 336h0M901 332h0M692 328h0M842 359h0M831 331h0M723 330h0M710 328h0M760 335h0M919 337h0M840 359h0M751 358h0M745 338h0M935 357h0M760 359h0M713 360h0M768 336h0M947 357h0M772 362h0M812 321h0M926 358h0M742 359h0M907 359h0M898 334h0M801 331h0M872 334h0M896 358h0M696 367h0M937 338h0M811 336h0M738 338h0M695 333h0M846 359h0M869 357h0M785 335h0M741 336h0M733 333h0M840 339h0M855 361h0M805 321h0M907 333h0M802 338h0M695 358h0M711 329h0M918 357h0M745 336h0M702 370h0M764 337h0M713 361h0M900 357h0M788 363h0M922 334h0M946 360h0M745 333h0M822 328h0M694 357h0M797 357h0M786 327h0M931 359h0M878 318h0M899 358h0M852 336h0M928 338h0M924 334h0M737 337h0M712 338h0M877 330h0M851 357h0M905 360h0M752 358h0M691 357h0M859 360h0M910 361h0M923 357h0M735 366h0M821 359h0M864 338h0M872 363h0M697 338h0M853 360h0M783 335h0M736 357h0M853 333h0M743 357h0M761 338h0M894 360h0M692 358h0M835 335h0M729 334h0M921 331h0M927 362h0M826 358h0M939 338h0M912 335h0M910 337h0M939 361h0M921 358h0M778 337h0M780 360h0M917 335h0M868 330h0M833 336h0M748 338h0M852 359h0M909 336h0M860 338h0M934 357h0M802 334h0M770 332h0M900 337h0M772 338h0M791 359h0M708 338h0M864 337h0M834 337h0M715 338h0M734 358h0M903 357h0M846 338h0M940 358h0M895 367h0M719 335h0M943 359h0M908 359h0M753 362h0M752 363h0M844 364h0M713 361h0M767 359h0M771 335h0M900 329h0M934 360h0M925 337h0M765 337h0M793 361h0M831 364h0M872 361h0M921 329h0M762 332h0M720 333h0M844 364h0M860 359h0M757 363h0M820 332h0M896 360h0M857 331h0M863 367h0M800 361h0M875 336h0M890 333h0M823 358h0M867 336h0M816 337h0M724 358h0M866 361h0M944 335h0M792 336h0M932 336h0M710 337h0M943 337h0M952 362h0M867 361h0M934 322h0M839 338h0M933 339h0M807 336h0M749 330h0M864 359h0M916 363h0M761 358h0M840 336h0M753 357h0M944 337h0M850 357h0M715 337h0M923 333h0M811 358h0M716 357h0M829 360h0M906 338h0M914 360h0M915 333h0M772 363h0M696 333h0M721 338h0M836 358h0M948 358h0M698 357h0M951 360h0M902 359h0M869 334h0M828 338h0M749 339h0M891 361h0M848 357h0M814 362h0M712 335h0M890 363h0M849 358h0M754 358h0M924 335h0M716 360h0M811 360h0M808 337h0M951 332h0M836 334h0M938 363h0M909 335h0M767 337h0M815 333h0M810 333h0M769 360h0M795 336h0M942 359h0M774 359h0M952 359h0M935 337h0M782 358h0M773 336h0M732 362h0M801 360h0M871 338h0M939 364h0M809 362h0M741 338h0M833 337h0M840 363h0M883 338h0M736 333h0M920 334h0M791 361h0M719 370h0M893 335h0M715 361h0M781 361h0M797 359h0M823 363h0M800 338h0M949 361h0M912 358h0M757 360h0M808 336h0M871 362h0M917 337h0M914 336h0M894 336h0M853 360h0M815 336h0M770 357h0M836 335h0M742 357h0M947 336h0M888 337h0M830 358h0M693 362h0M785 327h0M912 358h0M859 360h0M860 332h0M880 358h0M939 361h0M714 333h0M887 334h0M895 333h0M884 360h0M788 358h0M841 335h0M712 338h0M925 363h0M796 363h0M819 336h0M754 358h0M920 366h0M709 337h0M910 361h0M798 359h0M916 336h0M906 360h0M869 336h0M891 337h0M792 374h0M839 360h0M762 377h0M762 335h0M783 359h0M803 337h0M716 336h0M795 334h0M790 337h0M829 358h0M753 334h0M924 360h0M789 371h0M903 336h0M911 363h0M773 327h0M729 364h0M925 364h0M808 369h0M835 335h0M765 363h0M859 365h0M848 339h0M950 326h0M935 339h0M787 338h0M898 363h0M942 338h0M718 360h0M876 358h0M863 339h0M704 330h0M740 359h0M836 359h0M846 338h0M812 359h0M812 336h0M859 369h0M877 334h0M908 367h0M803 357h0M937 335h0M871 359h0M865 338h0M879 335h0M730 338h0M713 336h0M717 389h0M841 387h0M817 385h0M754 389h0M756 409h0M878 384h0M752 412h0M855 386h0M924 380h0M748 389h0M778 389h0M774 411h0M700 381h0M880 388h0M730 384h0M710 410h0M839 412h0M803 387h0M756 413h0M884 381h0M754 409h0M944 413h0M795 385h0M819 421h0M807 381h0M885 411h0M819 378h0M843 384h0M817 408h0M709 409h0M813 410h0M789 389h0M815 409h0M925 389h0M770 387h0M861 386h0M867 390h0M715 375h0M825 386h0M866 386h0M770 410h0M844 386h0M705 414h0M950 390h0M838 411h0M937 387h0M802 411h0M751 411h0M738 373h0M939 383h0M713 408h0M946 388h0M771 382h0M724 412h0M767 382h0M791 417h0M818 389h0M837 414h0M810 411h0M911 382h0M753 390h0M752 388h0M788 385h0M760 390h0M799 412h0M717 386h0M908 384h0M709 410h0M851 409h0M747 385h0M915 409h0M776 416h0M749 385h0M855 388h0M915 383h0M749 413h0M895 381h0M701 409h0M801 388h0M815 408h0M768 409h0M763 415h0M738 386h0M765 409h0M694 410h0M936 408h0M708 387h0M927 389h0M936 415h0M854 412h0M810 386h0M938 410h0M936 386h0M836 409h0M773 390h0M783 388h0M706 414h0M691 410h0M758 414h0M749 411h0M824 409h0M782 410h0M905 385h0M811 385h0M923 389h0M912 412h0M723 387h0M831 408h0M756 414h0M886 389h0M912 384h0M806 385h0M778 381h0M723 415h0M845 386h0M825 387h0M731 388h0M921 383h0M710 408h0M845 388h0M943 365h0M911 420h0M801 387h0M784 390h0M787 388h0M714 385h0M868 384h0M800 408h0M945 419h0M786 409h0M910 421h0M833 409h0M892 389h0M892 388h0M946 357h0M730 417h0M791 410h0M693 385h0M765 388h0M705 413h0M883 387h0M945 384h0M706 386h0M693 385h0M828 389h0M754 412h0M843 413h0M756 416h0M876 413h0M947 409h0M810 389h0M893 388h0M777 388h0M725 384h0M759 410h0M952 389h0M848 410h0M845 388h0M781 410h0M872 413h0M743 386h0M934 412h0M721 385h0M906 411h0M870 409h0M734 389h0M769 426h0M748 414h0M917 410h0M908 410h0M926 389h0M699 413h0M762 370h0M769 409h0M766 410h0M835 387h0M810 409h0M745 389h0M947 414h0M745 409h0M794 408h0M730 411h0M810 389h0M737 409h0M755 411h0M758 415h0M730 384h0M718 412h0M738 419h0M864 388h0M925 408h0M759 389h0M846 412h0M739 388h0M778 370h0M720 411h0M809 385h0M778 384h0M926 387h0M719 418h0M831 410h0M859 408h0M846 412h0M712 384h0M750 415h0M816 415h0M836 387h0M782 408h0M924 385h0M913 408h0M916 411h0M766 389h0M705 414h0M921 414h0M716 381h0M818 386h0M704 415h0M871 380h0M808 411h0M810 382h0M750 387h0M692 386h0M859 409h0M851 408h0M915 389h0M750 385h0M936 384h0M894 408h0M801 416h0M702 390h0M885 379h0M899 387h0M840 389h0M853 390h0M739 377h0M765 388h0M809 386h0M913 411h0M788 387h0M710 383h0M899 388h0M706 387h0M787 416h0M929 416h0M919 411h0M776 412h0M952 390h0M845 422h0M952 388h0M938 389h0M771 413h0M725 413h0M768 384h0M746 417h0M775 411h0M852 387h0M698 417h0M728 385h0M916 408h0M859 408h0M815 388h0M893 387h0M798 408h0M924 412h0M856 388h0M703 413h0M809 383h0M718 384h0M950 389h0M870 388h0M718 390h0M770 410h0M939 409h0M754 410h0M714 386h0M706 412h0M818 387h0M804 410h0M754 382h0M743 388h0M847 387h0M834 408h0M847 383h0M824 386h0M701 414h0M942 385h0M861 419h0M878 411h0M914 409h0M717 413h0M716 387h0M884 410h0M752 410h0M821 387h0M881 410h0M808 409h0M770 414h0M813 382h0M829 412h0M705 410h0M800 384h0M747 388h0M893 390h0M738 384h0M882 390h0M942 378h0M767 412h0M730 412h0M811 385h0M772 390h0M701 381h0M770 415h0M906 409h0M832 410h0M715 388h0M732 386h0M924 388h0M926 410h0M748 414h0M740 382h0M732 389h0M950 410h0M874 387h0M913 411h0M729 418h0M764 409h0M695 389h0M899 411h0M818 409h0M764 411h0M893 412h0M763 414h0M790 411h0M864 389h0M893 413h0M791 415h0M756 411h0M898 415h0M921 412h0M766 411h0M905 389h0M746 408h0M898 386h0M715 410h0M741 388h0M743 383h0M739 412h0M752 409h0M920 389h0M911 418h0M809 411h0M746 416h0M806 411h0M752 421h0M798 387h0M922 408h0M936 408h0M880 384h0M731 387h0M950 411h0M946 411h0M908 380h0M932 387h0M714 408h0M792 408h0M724 383h0M895 379h0M819 411h0M724 410h0M857 390h0M877 410h0M875 415h0M918 408h0M843 414h0M945 408h0M929 408h0M861 422h0M719 415h0M821 389h0M746 389h0M775 412h0M870 408h0M885 410h0M918 384h0M798 386h0M712 387h0M876 421h0M903 411h0M751 416h0M867 416h0M779 411h0M699 389h0M886 383h0M776 387h0M862 389h0M852 409h0M733 409h0M869 389h0M719 381h0M814 410h0M867 412h0M869 389h0M715 384h0M791 408h0M751 413h0M817 386h0M778 388h0M740 385h0M692 383h0M884 413h0M720 408h0M737 414h0M754 415h0M849 387h0M743 409h0M749 388h0M714 387h0M757 416h0M825 410h0M848 382h0M872 383h0M924 413h0M718 386h0M834 410h0M790 385h0M790 387h0M916 384h0M694 388h0M693 389h0M814 386h0M795 411h0M720 411h0M903 410h0M716 408h0M938 409h0M852 389h0M828 382h0M937 411h0M786 386h0M834 413h0M910 382h0M884 384h0M771 409h0M766 385h0M924 413h0M829 410h0M797 409h0M854 384h0M791 387h0M817 383h0M818 386h0M879 388h0M921 387h0M850 388h0M731 388h0M862 382h0M738 385h0M759 408h0M856 386h0M924 408h0M743 413h0M791 411h0M850 411h0M835 417h0M728 385h0M921 386h0M819 413h0M929 390h0M729 389h0M699 383h0M707 385h0M725 383h0M711 388h0M935 410h0M858 378h0M902 411h0M774 410h0M742 383h0M949 410h0M765 412h0M845 387h0M896 410h0M804 410h0M938 386h0M835 408h0M737 389h0M943 386h0M812 412h0M885 413h0M773 411h0M753 382h0M803 377h0M786 385h0M759 415h0M870 408h0M923 389h0M784 379h0M745 408h0M907 385h0M882 389h0M849 390h0M805 409h0M795 417h0M736 388h0M868 411h0M933 389h0M832 383h0M812 409h0M793 388h0M935 387h0M951 415h0M701 369h0M942 414h0M712 412h0M780 408h0M738 418h0M743 388h0M778 386h0M758 384h0M905 384h0M820 414h0M950 409h0M799 389h0M806 388h0M918 409h0M946 374h0M924 412h0M891 384h0M789 387h0M879 408h0M773 384h0M936 409h0M859 390h0M888 415h0M821 413h0M905 384h0M726 383h0M818 408h0M930 410h0M723 412h0M792 390h0M890 410h0M830 409h0M817 385h0M701 413h0M846 389h0M781 385h0M757 410h0M868 414h0M766 412h0M734 416h0M928 419h0M911 383h0M805 388h0M928 409h0M697 386h0M725 410h0M788 415h0M945 384h0M931 387h0M751 418h0M922 408h0M731 409h0M788 389h0M881 411h0M914 386h0M695 373h0M811 386h0M911 409h0M745 421h0M789 388h0M733 382h0M724 415h0M846 408h0M770 409h0M939 380h0M737 409h0M810 408h0M839 413h0M940 375h0M809 410h0M910 389h0M804 387h0M890 381h0M851 414h0M787 414h0M781 411h0M825 415h0M826 410h0M705 390h0M717 414h0M776 413h0M783 388h0M693 386h0M908 408h0M729 410h0M905 408h0M693 413h0M898 389h0M749 387h0M889 388h0M929 387h0M783 409h0M807 388h0M850 385h0M769 410h0M717 385h0M777 384h0M804 387h0M868 388h0M847 410h0M770 380h0M818 411h0M925 389h0M914 409h0M783 409h0M816 410h0M948 413h0M714 410h0M742 412h0M692 385h0M698 390h0M792 377h0M879 388h0M912 412h0M934 383h0M907 426h0M911 388h0M691 388h0M782 412h0M697 409h0M914 388h0M794 411h0M750 370h0M736 389h0M805 409h0M903 412h0M810 412h0M784 386h0M906 413h0M937 409h0M930 389h0M803 408h0M788 388h0M885 414h0M801 386h0M716 408h0M750 413h0M733 389h0M910 409h0M744 390h0M726 388h0M949 386h0M790 386h0M792 387h0M924 388h0M704 433h0M742 421h0M876 409h0M702 411h0M945 408h0M764 408h0M752 382h0M915 411h0M893 417h0M820 379h0M775 408h0M834 387h0M796 409h0M806 387h0M749 376h0M745 388h0M856 409h0M815 386h0M848 379h0M778 388h0M717 412h0M840 379h0M696 386h0M761 386h0M839 380h0M896 389h0M805 387h0M951 408h0M792 414h0M837 409h0M861 409h0M795 411h0M746 410h0M729 382h0M704 413h0M919 388h0M942 387h0M888 411h0M883 386h0M825 409h0M769 409h0M847 388h0M887 408h0M938 388h0M901 387h0M775 388h0M953 385h0M891 387h0M696 417h0M882 384h0M775 387h0M791 409h0M720 387h0M705 386h0M799 389h0M797 389h0M892 409h0M851 389h0M788 379h0M914 415h0M867 390h0M904 409h0M884 409h0M764 412h0M910 388h0M719 409h0M932 408h0M769 408h0M952 412h0M913 389h0M880 386h0M893 411h0M722 410h0M771 386h0M902 410h0M931 384h0M931 388h0M850 414h0M936 408h0M697 412h0M791 409h0M947 381h0M760 386h0M730 408h0M947 389h0M924 386h0M859 408h0M924 372h0M879 390h0M765 387h0M708 415h0M877 386h0M822 411h0M888 412h0M773 389h0M847 365h0M911 383h0M917 388h0M765 408h0M819 388h0M816 408h0M849 387h0M849 413h0M750 387h0M826 411h0M701 387h0M792 409h0M722 388h0M829 408h0M894 388h0M901 409h0M894 386h0M759 410h0M740 411h0M712 389h0M713 413h0M803 414h0M902 384h0M774 389h0M821 387h0M839 411h0M923 409h0M932 382h0M927 386h0M906 383h0M745 412h0M868 409h0M763 427h0M904 423h0M869 408h0M785 389h0M778 416h0M940 389h0M803 385h0M733 387h0M764 386h0M852 409h0M824 388h0M937 412h0M882 410h0M800 389h0M704 411h0M919 388h0M795 413h0M867 384h0M787 409h0M745 388h0M951 385h0M915 411h0M882 388h0M898 410h0M882 387h0M885 409h0M759 383h0M852 409h0M767 386h0M778 410h0M726 387h0M871 381h0M860 414h0M879 389h0M797 384h0M701 378h0M834 389h0M913 390h0M757 386h0M818 411h0M784 414h0M799 381h0M885 409h0M705 421h0M702 410h0M939 409h0M861 386h0M788 385h0M692 417h0M863 415h0M771 389h0M853 388h0M856 413h0M863 381h0M931 384h0M748 382h0M700 408h0M795 387h0M910 413h0M907 411h0M829 388h0M795 389h0M719 411h0M730 383h0M890 413h0M757 409h0M772 386h0M828 388h0M942 408h0M736 382h0M700 388h0M913 418h0M745 389h0M799 389h0M698 409h0M897 389h0M751 390h0M735 386h0M708 384h0M929 411h0M870 409h0M715 385h0M759 389h0M701 409h0M765 413h0M755 389h0M774 409h0M870 386h0M758 388h0M902 411h0M742 413h0M702 409h0M786 389h0M775 385h0M700 387h0M833 387h0M876 388h0M829 410h0M725 414h0M770 410h0M913 388h0M781 389h0M727 389h0M897 412h0M715 383h0M721 409h0M763 387h0M841 381h0M883 421h0M754 388h0M771 412h0M848 388h0M835 387h0M691 383h0M817 389h0M851 383h0M821 381h0M924 414h0M819 411h0M704 416h0M754 414h0M947 413h0M804 386h0M852 410h0M904 388h0M934 411h0M922 388h0M731 388h0M783 382h0M779 387h0M858 408h0M857 386h0M916 388h0M833 388h0M890 389h0M863 384h0M723 388h0M863 389h0M786 388h0M738 409h0M814 387h0M924 385h0M937 414h0M776 389h0M796 384h0M779 378h0M782 383h0M854 385h0M839 381h0M757 389h0M858 418h0M757 387h0M894 410h0M843 386h0M816 411h0M737 384h0M904 409h0M847 411h0M836 409h0M763 412h0M855 412h0M753 387h0M716 411h0M803 388h0M897 389h0M791 416h0M750 413h0M783 384h0M900 387h0M705 417h0M712 389h0M730 414h0M826 414h0M724 412h0M875 385h0M774 385h0M697 383h0M891 420h0M912 410h0M910 418h0M795 417h0M859 385h0M721 385h0M918 409h0M805 409h0M835 410h0M910 375h0M829 389h0M845 388h0M744 409h0M861 419h0M854 373h0M749 409h0M807 387h0M809 389h0M807 410h0M862 390h0M715 389h0M836 408h0M881 389h0M771 381h0M883 383h0M856 385h0M918 389h0M880 389h0M918 427h0M887 416h0M833 409h0M741 418h0M844 408h0M707 386h0M764 387h0M905 409h0M719 385h0M828 385h0M881 409h0M890 410h0M891 462h0M826 439h0M747 441h0M744 463h0M693 462h0M940 438h0M911 461h0M812 462h0M851 430h0M880 461h0M876 477h0M945 421h0M866 438h0M840 436h0M759 441h0M765 483h0M830 466h0M759 427h0M907 439h0M776 438h0M784 460h0M758 464h0M883 437h0M748 438h0M859 415h0M836 465h0M696 437h0M838 440h0M771 437h0M828 461h0M767 463h0M863 439h0M924 460h0M923 465h0M860 462h0M770 440h0M867 461h0M913 435h0M849 437h0M770 461h0M783 474h0M701 460h0M898 466h0M870 461h0M886 438h0M742 463h0M906 460h0M870 434h0M729 463h0M887 440h0M843 460h0M883 440h0M814 437h0M919 465h0M879 461h0M881 469h0M823 438h0M907 430h0M818 464h0M714 441h0M767 415h0M949 441h0M809 467h0M926 438h0M705 470h0M697 436h0M719 463h0M867 462h0M741 440h0M830 465h0M883 467h0M843 437h0M950 439h0M907 464h0M842 461h0M878 463h0M850 461h0M873 460h0M820 440h0M919 438h0M691 462h0M787 440h0M719 462h0M715 468h0M703 439h0M866 464h0M841 463h0M829 467h0M781 465h0M794 438h0M915 440h0M740 464h0M832 438h0M857 467h0M730 462h0M808 436h0M797 463h0M716 439h0M770 440h0M868 464h0M940 468h0M713 441h0M873 463h0M784 436h0M700 466h0M938 461h0M791 440h0M710 460h0M881 464h0M888 465h0M714 439h0M904 438h0M924 440h0M938 432h0M730 429h0M938 461h0M748 441h0M797 437h0M771 464h0M876 461h0M695 434h0M756 439h0M794 460h0M945 438h0M893 463h0M902 435h0M858 437h0M735 441h0M916 461h0M724 440h0M803 463h0M921 470h0M946 439h0M889 462h0M725 460h0M742 438h0M885 463h0M767 460h0M814 463h0M890 438h0M692 441h0M738 438h0M851 462h0M813 437h0M781 462h0M773 440h0M701 439h0M826 460h0M746 467h0M862 439h0M903 465h0M835 433h0M779 463h0M940 464h0M926 463h0M807 441h0M859 460h0M870 433h0M866 461h0M803 460h0M846 474h0M756 462h0M948 461h0M812 436h0M766 462h0M903 438h0M951 440h0M844 462h0M820 441h0M933 439h0M941 439h0M811 439h0M829 434h0M881 461h0M730 436h0M780 461h0M908 463h0M776 439h0M943 424h0M827 466h0M754 469h0M715 437h0M759 440h0M753 462h0M894 440h0M846 464h0M720 463h0M723 439h0M725 463h0M780 463h0M890 465h0M813 439h0M934 426h0M932 460h0M942 465h0M920 440h0M743 460h0M905 437h0M892 441h0M906 437h0M698 460h0M866 440h0M772 462h0M783 440h0M810 460h0M862 462h0M804 466h0M903 464h0M787 434h0M870 441h0M929 474h0M841 436h0M800 440h0M757 440h0M851 461h0M904 463h0M721 460h0M750 462h0M795 441h0M907 472h0M806 441h0M946 464h0M759 468h0M777 439h0M757 460h0M783 462h0M934 462h0M820 462h0M712 461h0M793 438h0M715 439h0M750 464h0M721 438h0M922 462h0M728 464h0M915 437h0M776 460h0M896 440h0M826 441h0M764 439h0M779 436h0M823 441h0M860 463h0M912 428h0M774 437h0M933 438h0M772 461h0M833 441h0M801 438h0M908 462h0M850 441h0M901 439h0M874 462h0M849 434h0M908 439h0M828 431h0M893 467h0M709 440h0M923 441h0M920 463h0M901 437h0M779 438h0M770 436h0M916 462h0M695 440h0M746 462h0M716 460h0M947 441h0M700 462h0M910 427h0M893 434h0M833 465h0M775 435h0M833 437h0M873 460h0M787 463h0M725 437h0M873 460h0M928 438h0M777 463h0M926 464h0M835 437h0M853 435h0M773 440h0M741 462h0M785 465h0M711 441h0M821 462h0M905 464h0M894 461h0M750 461h0M809 440h0M948 466h0M950 441h0M944 438h0M850 438h0M895 441h0M947 440h0M742 436h0M835 461h0M698 467h0M906 439h0M773 465h0M787 441h0M711 463h0M912 463h0M736 466h0M756 440h0M705 464h0M745 461h0M740 441h0M917 460h0M693 430h0M799 437h0M801 437h0M860 462h0M829 441h0M804 441h0M864 437h0M917 460h0M849 435h0M881 441h0M732 439h0M923 467h0M795 463h0M938 460h0M864 462h0M778 440h0M767 440h0M904 464h0M877 437h0M740 441h0M933 460h0M812 434h0M896 462h0M920 467h0M834 433h0M828 460h0M935 462h0M828 431h0M846 462h0M737 440h0M908 438h0M748 462h0M766 440h0M728 430h0M697 466h0M711 461h0M842 464h0M705 468h0M869 463h0M862 440h0M860 436h0M823 439h0M715 439h0M897 464h0M920 441h0M909 464h0M846 461h0M913 439h0M913 439h0M936 461h0M717 438h0M931 465h0M881 440h0M788 461h0M744 439h0M857 439h0M696 440h0M827 441h0M872 460h0M936 465h0M874 439h0M925 464h0M757 439h0M736 440h0M917 464h0M860 461h0M890 435h0M797 440h0M819 437h0M918 441h0M742 438h0M789 441h0M910 461h0M796 440h0M700 437h0M918 435h0M792 435h0M882 441h0M711 462h0M855 438h0M953 465h0M898 432h0M736 461h0M769 438h0M884 462h0M730 441h0M765 435h0M883 440h0M907 464h0M881 464h0M765 465h0M775 461h0M933 468h0M755 441h0M763 436h0M762 461h0M876 460h0M707 460h0M860 463h0M847 462h0M824 435h0M812 484h0M714 438h0M808 437h0M900 463h0M817 435h0M832 441h0M879 441h0M855 463h0M899 436h0M800 464h0M775 436h0M855 461h0M863 432h0M911 472h0M885 461h0M830 463h0M927 437h0M698 440h0M898 461h0M764 423h0M747 439h0M887 464h0M846 438h0M743 461h0M778 436h0M875 465h0M730 438h0M920 439h0M713 433h0M943 439h0M845 440h0M817 460h0M878 441h0M713 466h0M751 461h0M904 460h0M788 460h0M847 441h0M872 467h0M929 461h0M843 438h0M796 462h0M709 441h0M828 437h0M760 439h0M768 460h0M794 433h0M876 436h0M848 437h0M761 460h0M693 438h0M944 463h0M863 462h0M808 441h0M897 439h0M930 436h0M825 431h0M759 460h0M785 461h0M913 460h0M808 436h0M888 460h0M859 440h0M920 439h0M835 461h0M770 433h0M935 461h0M808 460h0M867 462h0M861 461h0M930 466h0M696 440h0M911 475h0M752 439h0M720 439h0M851 463h0M727 438h0M850 472h0M808 440h0M759 463h0M725 428h0M825 466h0M754 461h0M748 461h0M773 460h0M727 461h0M909 440h0M917 436h0M911 438h0M841 437h0M892 461h0M916 465h0M896 462h0M919 441h0M908 460h0M836 473h0M859 435h0M720 436h0M723 461h0M820 461h0M943 467h0M880 461h0M935 466h0M875 440h0M927 440h0M810 465h0M834 460h0M832 464h0M741 441h0M729 432h0M783 440h0M693 437h0M744 462h0M760 439h0M839 440h0M768 462h0M766 476h0M797 460h0M831 470h0M710 438h0M804 463h0M703 462h0M811 440h0M941 440h0M915 462h0M917 460h0M860 441h0M704 430h0M947 465h0M881 461h0M757 440h0M705 467h0M833 461h0M729 463h0M750 461h0M912 464h0M796 439h0M809 460h0M947 460h0M915 474h0M705 440h0M864 438h0M903 440h0M693 439h0M909 462h0M856 440h0M797 461h0M700 437h0M831 437h0M764 439h0M904 438h0M848 437h0M705 441h0M695 440h0M733 430h0M694 439h0M858 435h0M701 437h0M729 461h0M925 441h0M868 461h0M841 441h0M806 437h0M840 440h0M798 464h0M868 464h0M691 463h0M841 439h0M920 440h0M714 436h0M873 464h0M902 462h0M899 439h0M950 435h0M851 461h0M765 464h0M762 464h0M825 460h0M830 465h0M856 461h0M708 460h0M769 467h0M836 465h0M721 465h0M814 434h0M876 460h0M806 466h0M737 439h0M930 439h0M851 460h0M923 461h0M928 441h0M713 432h0M803 435h0M927 437h0M855 462h0M813 462h0M934 461h0M788 441h0M832 465h0M880 434h0M753 464h0M731 461h0M804 465h0M723 436h0M784 461h0M943 439h0M917 462h0M734 441h0M870 461h0M935 434h0M731 461h0M942 468h0M723 467h0M730 463h0M806 464h0M935 437h0M837 461h0M815 441h0M826 439h0M926 431h0M797 461h0M903 468h0M818 441h0M708 441h0M923 460h0M823 476h0M740 463h0M804 464h0M947 468h0M802 421h0M840 469h0M909 460h0M891 440h0M839 463h0M769 463h0M725 461h0M702 432h0M712 440h0M789 439h0M849 460h0M768 440h0M839 462h0M949 465h0M919 436h0M796 438h0M800 460h0M908 441h0M823 439h0M772 464h0M708 431h0M771 462h0M951 438h0M797 435h0M905 469h0M861 463h0M711 460h0M874 441h0M951 462h0M721 440h0M802 437h0M944 464h0M833 436h0M788 435h0M696 460h0M831 461h0M798 462h0M933 438h0M942 460h0M941 437h0M808 463h0M759 438h0M776 441h0M783 461h0M826 462h0M723 462h0M798 461h0M805 430h0M717 432h0M949 440h0M927 439h0M864 440h0M723 439h0M798 433h0M911 439h0M928 461h0M727 440h0M819 464h0M833 440h0M901 460h0M825 464h0M828 439h0M848 438h0M880 437h0M888 460h0M828 441h0M724 469h0M911 437h0M706 440h0M823 461h0M775 465h0M824 460h0M949 439h0M953 465h0M750 465h0M908 441h0M776 460h0M865 467h0M835 471h0M924 417h0M787 463h0M887 438h0M889 438h0M799 465h0M792 463h0M702 438h0M708 438h0M693 469h0M929 437h0M760 460h0M872 438h0M900 464h0M752 460h0M724 464h0M818 439h0M860 440h0M927 440h0M903 460h0M806 461h0M842 438h0M742 434h0M751 435h0M708 430h0M858 435h0M864 440h0M779 461h0M779 440h0M735 439h0M932 439h0M784 441h0M902 464h0M820 470h0M862 462h0M766 435h0M722 439h0M925 461h0M741 441h0M915 462h0M758 433h0M783 463h0M701 460h0M888 439h0M809 429h0M813 461h0M748 437h0M883 440h0M760 432h0M868 437h0M788 432h0M849 460h0M888 475h0M896 439h0M841 465h0M850 463h0M920 437h0M904 438h0M934 460h0M952 461h0M895 439h0M785 462h0M776 441h0M779 462h0M864 462h0M771 440h0M735 461h0M738 434h0M806 438h0M804 464h0M743 466h0M867 434h0M929 441h0M759 437h0M801 440h0M722 461h0M746 434h0M916 464h0M878 437h0M895 462h0M761 462h0M838 464h0M720 460h0M735 465h0M939 440h0M926 466h0M811 460h0M821 434h0M884 440h0M846 460h0M733 465h0M812 440h0M772 433h0M824 462h0M888 440h0M717 441h0M843 440h0M951 435h0M748 462h0M945 440h0M843 426h0M766 461h0M800 462h0M932 434h0M867 464h0M757 434h0M747 438h0M945 440h0M821 434h0M832 438h0M897 465h0M837 460h0M864 438h0M909 441h0M854 461h0M702 464h0M831 460h0M846 465h0M930 436h0M796 436h0M940 436h0M773 466h0M808 438h0M927 468h0M814 439h0M801 436h0M762 435h0M756 438h0M851 436h0M729 436h0M817 463h0M806 461h0M928 462h0M816 467h0M881 435h0M831 462h0M734 466h0M839 438h0M734 460h0M876 470h0M829 437h0M850 440h0M768 439h0M883 464h0M815 440h0M693 460h0M712 434h0M810 462h0M708 435h0M762 436h0M789 460h0M816 463h0M815 438h0M738 440h0M701 438h0M804 460h0M867 462h0M876 439h0M757 441h0M796 437h0M763 463h0M695 432h0M715 440h0M737 439h0M902 463h0M743 427h0M887 462h0M707 467h0M697 438h0M799 461h0M702 440h0M953 463h0M740 462h0M855 436h0M918 462h0M911 441h0M899 438h0M843 440h0M792 430h0M767 463h0M824 460h0M825 435h0M916 468h0M827 440h0M938 441h0M907 436h0M845 467h0M870 463h0M804 463h0M691 468h0M730 462h0M792 437h0M773 462h0M765 438h0M840 439h0M758 463h0M925 462h0M811 465h0M829 461h0M834 440h0M831 439h0M857 440h0M753 439h0M924 440h0M703 436h0M805 437h0M713 437h0M862 462h0M775 460h0M754 440h0M899 467h0M862 437h0M718 440h0M917 438h0M836 462h0M795 466h0M838 437h0M922 436h0M952 436h0M829 431h0M895 440h0M798 437h0M757 461h0M726 437h0M850 460h0M742 437h0M739 461h0M828 441h0M714 462h0M852 438h0M945 439h0M843 464h0M873 468h0M704 462h0M738 466h0M761 440h0M926 462h0M703 461h0M796 438h0M866 440h0M701 437h0M721 465h0M859 440h0M775 464h0M822 438h0M834 461h0M748 441h0M947 440h0M880 438h0M736 438h0M701 436h0M852 441h0M894 464h0M791 436h0M756 462h0M780 468h0M813 461h0M691 460h0M695 462h0M912 462h0M765 461h0M722 441h0M753 439h0M744 468h0M841 438h0M838 461h0M835 431h0M937 438h0M937 460h0M843 430h0M924 439h0M933 440h0M837 432h0M725 441h0M809 441h0M916 463h0M865 460h0M897 466h0M929 430h0M852 487h0M746 487h0M789 485h0M799 509h0M702 509h0M879 484h0M761 510h0M905 490h0M825 509h0M820 490h0M803 482h0M946 512h0M940 513h0M843 517h0M818 485h0M849 510h0M861 485h0M896 489h0M867 517h0M831 485h0M867 519h0M859 483h0M824 489h0M850 546h0M929 485h0M707 511h0M767 510h0M898 489h0M727 474h0M829 511h0M692 482h0M724 488h0M847 512h0M848 510h0M909 511h0M916 510h0M812 510h0M928 517h0M707 509h0M899 509h0M777 488h0M705 514h0M935 512h0M950 512h0M928 517h0M840 488h0M905 489h0M836 489h0M875 488h0M746 512h0M897 512h0M841 519h0M806 511h0M951 509h0M821 486h0M713 488h0M881 483h0M810 484h0M724 488h0M925 515h0M951 483h0M875 489h0M899 514h0M842 513h0M731 512h0M789 490h0M741 510h0M820 509h0M930 512h0M793 489h0M799 513h0M713 511h0M714 511h0M751 490h0M915 509h0M914 487h0M752 479h0M854 486h0M860 490h0M740 490h0M850 487h0M832 521h0M747 511h0M853 487h0M875 517h0M938 475h0M884 487h0M889 509h0M740 513h0M692 485h0M821 511h0M903 490h0M901 513h0M890 509h0M839 511h0M930 510h0M782 511h0M823 515h0M726 485h0M792 517h0M766 511h0M942 487h0M949 485h0M864 517h0M946 484h0M949 509h0M840 510h0M769 489h0M881 486h0M709 511h0M709 515h0M867 488h0M694 511h0M747 512h0M788 488h0M921 490h0M700 490h0M710 480h0M951 511h0M798 481h0M730 510h0M922 509h0M737 512h0M882 486h0M868 486h0M912 485h0M843 509h0M921 509h0M853 511h0M862 510h0M691 484h0M778 488h0M761 488h0M787 517h0M753 518h0M742 482h0M848 516h0M856 509h0M914 510h0M821 511h0M948 511h0M860 490h0M825 487h0M946 512h0M875 484h0M931 513h0M699 511h0M912 512h0M914 511h0M787 490h0M815 490h0M756 509h0M793 511h0M886 486h0M750 486h0M861 509h0M691 512h0M784 488h0M911 485h0M790 486h0M716 488h0M950 486h0M824 486h0M733 513h0M946 509h0M942 511h0M951 509h0M913 516h0M784 482h0M920 520h0M751 490h0M890 489h0M910 490h0M892 484h0M715 510h0M748 510h0M813 487h0M827 488h0M923 510h0M784 513h0M799 511h0M907 488h0M808 529h0M849 511h0M852 514h0M867 518h0M910 486h0M754 490h0M771 509h0M903 490h0M887 511h0M836 485h0M890 512h0M916 512h0M723 485h0M895 513h0M739 479h0M776 486h0M833 487h0M742 510h0M713 510h0M833 489h0M780 488h0M781 488h0M735 509h0M705 489h0M933 509h0M795 486h0M873 517h0M903 490h0M837 490h0M713 488h0M771 514h0M710 486h0M823 522h0M769 488h0M935 515h0M910 489h0M819 510h0M933 488h0M855 488h0M699 510h0M738 490h0M731 513h0M723 513h0M723 482h0M771 489h0M811 513h0M936 513h0M764 510h0M733 484h0M896 513h0M952 510h0M781 490h0M882 489h0M824 509h0M864 485h0M820 486h0M767 489h0M852 487h0M908 514h0M860 513h0M892 481h0M842 515h0M875 513h0M749 485h0M705 483h0M781 489h0M883 518h0M717 489h0M883 486h0M870 485h0M865 490h0M905 483h0M742 512h0M693 490h0M767 488h0M916 513h0M723 490h0M745 465h0M816 490h0M762 490h0M869 511h0M828 489h0M813 512h0M888 488h0M797 510h0M806 512h0M890 511h0M878 511h0M818 481h0M837 485h0M864 489h0M890 512h0M741 521h0M854 485h0M717 485h0M710 489h0M819 509h0M776 485h0M728 481h0M735 510h0M756 487h0M844 490h0M948 488h0M914 487h0M942 513h0M696 514h0M801 489h0M740 481h0M823 510h0M823 488h0M821 512h0M823 514h0M813 509h0M779 514h0M880 516h0M859 483h0M722 513h0M911 510h0M695 486h0M899 484h0M900 490h0M771 516h0M932 490h0M799 483h0M883 482h0M925 490h0M887 487h0M862 490h0M884 514h0M911 490h0M945 513h0M837 490h0M793 485h0M757 511h0M913 520h0M926 490h0M813 514h0M841 484h0M807 517h0M777 510h0M705 486h0M702 509h0M831 520h0M907 511h0M754 482h0M805 489h0M713 489h0M877 486h0M764 512h0M728 510h0M893 514h0M796 512h0M788 511h0M715 490h0M935 490h0M898 487h0M924 511h0M906 511h0M866 512h0M792 516h0M916 509h0M870 490h0M755 487h0M933 489h0M743 488h0M904 512h0M944 486h0M874 513h0M866 513h0M741 489h0M860 488h0M865 509h0M812 510h0M723 511h0M906 484h0M911 510h0M935 512h0M784 489h0M792 482h0M907 486h0M758 512h0M841 509h0M799 484h0M737 489h0M894 513h0M945 517h0M705 489h0M754 489h0M791 490h0M805 514h0M840 515h0M897 472h0M869 514h0M781 484h0M793 512h0M855 489h0M907 509h0M788 516h0M772 490h0M796 509h0M771 509h0M783 488h0M813 488h0M876 477h0M834 487h0M792 512h0M885 510h0M726 512h0M888 509h0M768 489h0M767 514h0M903 509h0M820 485h0M826 486h0M707 488h0M878 514h0M897 488h0M753 514h0M799 486h0M799 489h0M821 483h0M835 515h0M779 490h0M728 487h0M837 489h0M702 512h0M727 490h0M804 510h0M873 514h0M851 489h0M787 510h0M911 510h0M882 490h0M941 510h0M887 488h0M795 488h0M703 509h0M923 490h0M929 511h0M721 514h0M935 513h0M826 488h0M909 489h0M796 488h0M928 513h0M865 514h0M828 513h0M815 510h0M826 485h0M916 489h0M723 515h0M855 478h0M710 510h0M749 489h0M839 487h0M950 485h0M742 513h0M953 490h0M804 486h0M879 485h0M782 485h0M912 511h0M840 510h0M755 513h0M733 517h0M817 472h0M952 486h0M765 490h0M797 489h0M876 484h0M930 489h0M817 509h0M890 510h0M712 490h0M882 490h0M728 509h0M824 485h0M858 486h0M863 513h0M883 486h0M731 482h0M826 485h0M771 520h0M800 490h0M699 489h0M715 489h0M949 510h0M934 489h0M799 509h0M815 509h0M831 510h0M942 514h0M899 510h0M785 488h0M781 513h0M945 488h0M848 487h0M853 478h0M728 490h0M883 490h0M737 486h0M854 489h0M859 487h0M711 489h0M749 511h0M823 489h0M752 489h0M810 486h0M911 490h0M806 512h0M835 510h0M820 531h0M874 510h0M807 484h0M837 489h0M723 490h0M764 483h0M872 488h0M891 489h0M745 522h0M710 514h0M750 510h0M721 516h0M872 490h0M754 465h0M745 488h0M834 485h0M950 511h0M922 515h0M720 485h0M730 488h0M818 509h0M769 488h0M907 509h0M786 484h0M889 490h0M889 489h0M783 485h0M858 485h0M848 483h0M845 513h0M820 509h0M809 514h0M761 489h0M791 509h0M728 469h0M864 509h0M702 512h0M816 515h0M808 486h0M733 490h0M884 509h0M873 511h0M725 487h0M907 488h0M845 488h0M735 515h0M747 483h0M803 517h0M700 529h0M776 511h0M873 511h0M896 490h0M855 517h0M908 514h0M867 513h0M831 512h0M824 513h0M827 485h0M903 487h0M916 516h0M752 488h0M913 490h0M765 513h0M782 490h0M813 484h0M709 512h0M872 484h0M928 514h0M945 515h0M924 509h0M713 516h0M875 487h0M771 489h0M922 486h0M764 511h0M921 511h0M697 523h0M698 511h0M810 519h0M869 510h0M715 510h0M836 488h0M797 490h0M738 513h0M766 490h0M907 513h0M946 473h0M938 486h0M742 487h0M938 490h0M837 514h0M700 510h0M792 488h0M878 490h0M921 485h0M758 486h0M897 511h0M708 513h0M769 482h0M860 510h0M811 483h0M822 481h0M930 488h0M802 509h0M928 490h0M825 516h0M719 487h0M858 509h0M933 511h0M733 484h0M796 488h0M742 512h0M741 509h0M843 489h0M787 490h0M764 513h0M898 490h0M926 490h0M895 513h0M913 485h0M901 509h0M882 512h0M856 488h0M813 526h0M796 487h0M858 510h0M824 488h0M916 513h0M841 489h0M826 513h0M936 480h0M896 488h0M894 521h0M882 512h0M854 511h0M723 515h0M772 485h0M903 511h0M916 483h0M754 488h0M732 488h0M694 483h0M803 487h0M911 510h0M805 490h0M862 488h0M723 484h0M790 519h0M794 518h0M821 511h0M821 511h0M704 473h0M818 514h0M817 489h0M950 509h0M780 509h0M735 485h0M915 488h0M795 512h0M868 486h0M887 487h0M932 514h0M931 512h0M692 515h0M694 509h0M737 515h0M698 489h0M736 514h0M737 488h0M814 509h0M762 516h0M764 509h0M898 527h0M703 509h0M737 490h0M794 490h0M824 510h0M864 487h0M862 509h0M859 468h0M770 488h0M892 489h0M950 510h0M807 509h0M918 512h0M706 489h0M859 487h0M813 489h0M869 488h0M912 510h0M936 510h0M905 490h0M918 516h0M698 513h0M727 512h0M806 489h0M913 509h0M782 512h0M793 511h0M854 487h0M798 514h0M788 511h0M924 486h0M937 510h0M764 512h0M832 514h0M818 489h0M699 486h0M758 514h0M842 510h0M835 488h0M779 510h0M755 510h0M731 490h0M732 484h0M750 487h0M695 522h0M863 489h0M700 513h0M694 489h0M841 475h0M800 489h0M911 516h0M840 489h0M856 509h0M728 511h0M758 510h0M785 487h0M921 512h0M749 487h0M889 511h0M796 489h0M867 511h0M939 486h0M826 509h0M757 513h0M887 512h0M691 513h0M838 485h0M698 489h0M787 487h0M785 517h0M858 489h0M909 490h0M777 489h0M704 486h0M838 487h0M701 490h0M710 488h0M937 489h0M900 511h0M792 514h0M898 509h0M729 490h0M873 522h0M837 509h0M743 490h0M912 485h0M904 489h0M785 487h0M857 514h0M764 517h0M882 487h0M861 488h0M792 513h0M748 513h0M820 511h0M866 484h0M737 514h0M901 472h0M928 490h0M797 483h0M897 484h0M896 487h0M852 484h0M868 488h0M770 509h0M855 510h0M933 515h0M929 483h0M789 512h0M842 490h0M716 512h0M893 490h0M887 517h0M747 509h0M777 486h0M938 510h0M882 488h0M907 512h0M821 481h0M702 488h0M838 512h0M952 486h0M743 510h0M789 487h0M842 487h0M709 513h0M762 487h0M712 510h0M835 483h0M791 517h0M793 512h0M765 486h0M799 509h0M924 488h0M694 509h0M816 484h0M893 512h0M927 487h0M835 489h0M790 489h0M892 490h0M916 518h0M752 512h0M861 487h0M708 489h0M834 509h0M919 488h0M945 510h0M810 514h0M935 486h0M861 484h0M783 486h0M763 519h0M942 510h0M793 512h0M860 485h0M738 487h0M700 512h0M718 488h0M912 509h0M766 482h0M912 487h0M871 488h0M771 487h0M838 514h0M815 510h0M812 511h0M867 488h0M760 517h0M791 486h0M710 483h0M822 490h0M729 511h0M729 488h0M760 511h0M710 482h0M774 510h0M807 529h0M756 516h0M767 482h0M929 513h0M939 490h0M754 511h0M889 514h0M827 516h0M892 512h0M788 514h0M823 513h0M697 479h0M708 513h0M918 490h0M807 487h0M909 489h0M705 509h0M818 490h0M907 489h0M776 474h0M718 509h0M817 486h0M907 511h0M836 509h0M707 509h0M791 509h0M831 488h0M722 489h0M816 512h0M725 509h0M941 513h0M801 476h0M852 517h0M909 485h0M917 511h0M818 511h0M783 511h0M794 515h0M848 488h0M934 509h0M778 486h0M860 515h0M796 489h0M932 511h0M756 510h0M819 484h0M916 509h0M903 515h0M840 486h0M874 487h0M822 485h0M745 487h0M833 490h0M808 490h0M937 488h0M730 515h0M731 489h0M769 486h0M799 489h0M912 489h0M949 488h0M762 486h0M719 488h0M924 483h0M729 513h0M857 489h0M899 515h0M871 519h0M786 486h0M749 512h0M843 511h0M931 483h0M704 467h0M946 509h0M944 487h0M884 464h0M764 467h0M875 510h0M706 487h0M951 485h0M786 510h0M758 490h0M751 517h0M824 480h0M830 490h0M822 484h0M707 514h0M894 512h0M844 490h0M854 488h0M759 509h0M796 488h0M772 487h0M716 488h0M912 490h0M858 510h0M855 511h0M875 486h0M716 488h0M708 489h0M803 510h0M931 511h0M737 511h0M887 512h0M930 520h0M844 518h0M703 515h0M937 517h0M724 490h0M805 483h0M888 514h0M721 515h0M768 513h0M742 511h0M734 490h0M758 490h0M908 511h0M811 490h0M763 490h0M835 510h0M794 484h0M708 512h0M928 486h0M773 486h0M718 484h0M951 519h0M910 479h0M844 490h0M857 509h0M865 509h0M879 511h0M735 490h0M936 512h0M927 525h0M739 512h0M844 511h0M692 509h0M914 512h0M858 488h0M868 512h0M753 488h0M757 511h0M718 481h0M902 489h0M931 513h0M715 489h0M710 525h0M855 485h0M931 483h0M786 490h0M756 512h0M896 515h0M692 483h0M724 509h0M799 486h0M881 488h0M917 485h0M859 514h0" stroke="#4585c0" stroke-width="2.5" stroke-linecap="round" fill="none"/>
  <rect x="691" y="340" width="262" height="16" fill="#d9561c"/>
  <rect x="691" y="391" width="262" height="16" fill="#d9561c"/>
  <rect x="691" y="442.5" width="262" height="16" fill="#d9561c"/>
  <rect x="691" y="491.5" width="262" height="16" fill="#d9561c"/>
  <path d="M825 338h0M844 357h0M752 366h0M821 358h0M788 357h0M740 359h0M925 362h0M723 338h0M809 334h0M792 360h0M789 339h0M942 337h0M798 362h0M894 337h0M949 358h0M849 337h0M803 338h0M694 357h0M797 359h0M835 356h0M768 359h0M823 335h0M849 339h0M784 334h0M808 339h0M854 356h0M792 340h0M890 340h0M907 364h0M775 361h0M922 337h0M769 340h0M710 340h0M709 340h0M820 355h0M928 340h0M928 357h0M831 360h0M793 340h0M938 357h0M831 359h0M836 367h0M786 336h0M746 358h0M828 356h0M790 330h0M794 356h0M743 336h0M760 356h0M728 356h0M858 355h0M934 360h0M779 359h0M809 356h0M777 356h0M944 340h0M777 366h0M919 338h0M822 334h0M875 333h0M773 355h0M890 358h0M755 339h0M952 360h0M740 339h0M852 359h0M750 357h0M934 340h0M829 335h0M744 362h0M759 340h0M951 356h0M820 340h0M713 358h0M901 336h0M899 339h0M929 356h0M939 338h0M728 336h0M856 334h0M820 355h0M902 336h0M943 356h0M704 356h0M762 360h0M856 356h0M793 358h0M759 333h0M782 338h0M729 360h0M759 355h0M827 357h0M702 335h0M766 361h0M781 355h0M790 358h0M848 339h0M933 356h0M913 357h0M891 355h0M787 340h0M903 340h0M839 357h0M786 360h0M772 339h0M752 332h0M932 357h0M875 356h0M708 366h0M830 338h0M724 340h0M784 338h0M940 339h0M725 339h0M767 335h0M764 360h0M948 356h0M903 362h0M797 337h0M885 338h0M755 356h0M825 339h0M943 357h0M829 356h0M943 339h0M845 358h0M836 356h0M889 339h0M722 357h0M931 356h0M696 357h0M814 362h0M800 339h0M919 355h0M781 356h0M710 360h0M697 335h0M768 337h0M785 358h0M724 357h0M948 358h0M731 355h0M868 357h0M806 357h0M785 338h0M733 357h0M760 360h0M871 356h0M807 340h0M842 356h0M883 355h0M842 337h0M909 356h0M704 357h0M822 339h0M884 356h0M917 339h0M950 355h0M888 360h0M799 340h0M807 356h0M697 340h0M762 356h0M949 360h0M824 336h0M741 358h0M787 357h0M830 338h0M719 337h0M756 340h0M952 356h0M951 335h0M827 334h0M929 358h0M870 363h0M702 340h0M727 358h0M889 355h0M922 336h0M800 357h0M943 356h0M712 357h0M902 362h0M949 340h0M891 359h0M932 336h0M805 356h0M788 357h0M851 336h0M770 338h0M930 339h0M836 337h0M878 357h0M728 359h0M855 339h0M931 338h0M864 339h0M901 355h0M867 358h0M820 356h0M945 340h0M778 357h0M867 357h0M938 331h0M888 356h0M709 362h0M737 337h0M848 333h0M758 339h0M771 357h0M703 340h0M918 340h0M755 359h0M917 339h0M789 360h0M932 336h0M842 356h0M774 356h0M745 340h0M707 359h0M741 339h0M817 356h0M733 334h0M898 340h0M711 336h0M903 356h0M917 339h0M697 356h0M858 337h0M941 357h0M724 340h0M867 339h0M748 359h0M702 356h0M837 359h0M893 340h0M787 338h0M880 359h0M891 338h0M929 335h0M806 340h0M800 359h0M849 336h0M732 337h0M754 340h0M746 357h0M702 355h0M706 357h0M951 340h0M830 335h0M760 337h0M853 340h0M799 339h0M698 337h0M833 340h0M942 339h0M707 340h0M840 361h0M817 337h0M854 339h0M837 365h0M882 359h0M814 338h0M818 357h0M719 359h0M860 336h0M841 355h0M910 339h0M705 357h0M736 339h0M695 359h0M943 360h0M778 338h0M930 338h0M920 358h0M822 339h0M719 338h0M927 336h0M786 338h0M952 337h0M760 339h0M692 356h0M720 340h0M940 335h0M895 356h0M760 339h0M862 362h0M837 339h0M922 356h0M831 340h0M806 356h0M854 338h0M889 362h0M796 364h0M818 358h0M796 356h0M697 356h0M945 340h0M753 358h0M813 356h0M947 339h0M754 360h0M876 357h0M853 336h0M791 355h0M905 336h0M818 340h0M857 340h0M701 340h0M699 339h0M711 361h0M876 358h0M762 355h0M749 356h0M773 363h0M941 339h0M714 339h0M940 356h0M798 358h0M740 338h0M862 339h0M855 357h0M746 358h0M717 338h0M846 340h0M776 357h0M781 339h0M740 359h0M692 360h0M857 356h0M881 360h0M782 340h0M805 340h0M806 339h0M885 339h0M838 356h0M769 357h0M833 338h0M773 356h0M720 355h0M729 355h0M891 335h0M881 340h0M950 339h0M779 356h0M815 338h0M950 356h0M945 336h0M843 338h0M881 356h0M815 356h0M936 355h0M749 340h0M881 338h0M704 340h0M780 356h0M804 340h0M807 356h0M754 339h0M872 332h0M862 361h0M884 337h0M887 358h0M779 358h0M842 357h0M839 340h0M781 340h0M744 356h0M900 339h0M785 356h0M720 356h0M731 357h0M708 340h0M854 336h0M750 355h0M711 356h0M855 358h0M789 356h0M904 362h0M730 339h0M905 358h0M731 337h0M745 339h0M934 339h0M883 340h0M727 339h0M843 358h0M777 356h0M881 361h0M799 335h0M758 356h0M940 338h0M788 338h0M872 340h0M845 356h0M903 335h0M732 355h0M805 334h0M833 338h0M871 338h0M737 358h0M745 358h0M893 357h0M905 338h0M721 338h0M700 334h0M736 339h0M815 356h0M837 337h0M714 360h0M741 340h0M944 336h0M925 358h0M851 359h0M856 360h0M766 339h0M927 360h0M772 359h0M780 356h0M712 339h0M741 340h0M831 340h0M918 358h0M786 357h0M770 358h0M924 359h0M841 357h0M724 357h0M767 339h0M946 337h0M860 356h0M793 356h0M772 332h0M890 338h0M814 339h0M745 358h0M807 335h0M917 358h0M750 339h0M883 361h0M749 357h0M791 356h0M792 356h0M885 356h0M920 361h0M764 359h0M741 357h0M724 356h0M811 357h0M830 338h0M862 340h0M806 360h0M868 358h0M718 358h0M850 357h0M749 338h0M762 338h0M739 356h0M764 357h0M775 337h0M769 355h0M947 330h0M849 337h0M758 356h0M792 340h0M908 358h0M694 357h0M872 357h0M855 339h0M880 356h0M856 356h0M909 340h0M797 360h0M807 359h0M797 336h0M927 359h0M731 355h0M776 335h0M938 339h0M696 338h0M848 334h0M762 357h0M912 357h0M839 334h0M754 357h0M728 340h0M907 363h0M793 356h0M784 359h0M722 356h0M886 340h0M948 362h0M838 359h0M803 360h0M878 360h0M924 339h0M743 339h0M921 359h0M947 358h0M697 335h0M866 340h0M692 358h0M784 361h0M764 338h0M733 359h0M864 356h0M861 360h0M727 340h0M740 339h0M794 339h0M866 333h0M707 340h0M825 340h0M889 338h0M931 356h0M921 340h0M891 357h0M701 359h0M863 340h0M713 357h0M747 336h0M830 358h0M718 360h0M843 340h0M732 359h0M745 333h0M738 356h0M710 357h0M869 360h0M784 340h0M793 339h0M889 355h0M721 359h0M927 338h0M705 359h0M720 357h0M924 340h0M704 356h0M802 338h0M705 360h0M797 335h0M695 358h0M717 340h0M864 333h0M809 336h0M908 339h0M869 338h0M842 356h0M929 337h0M736 355h0M703 338h0M866 359h0M694 337h0M841 355h0M718 337h0M943 355h0M868 357h0M833 340h0M937 333h0M723 363h0M717 358h0M732 338h0M731 359h0M817 359h0M855 357h0M802 358h0M766 356h0M802 340h0M753 333h0M813 358h0M843 340h0M947 356h0M843 337h0M718 357h0M748 336h0M808 339h0M777 340h0M797 356h0M919 337h0M900 358h0M771 335h0M825 359h0M793 340h0M801 336h0M787 356h0M808 356h0M778 358h0M935 340h0M876 340h0M762 339h0M918 358h0M863 356h0M894 337h0M886 364h0M727 357h0M860 336h0M948 356h0M749 361h0M794 339h0M881 356h0M741 340h0M879 356h0M779 358h0M947 359h0M754 336h0M841 340h0M766 340h0M711 339h0M739 355h0M822 337h0M866 359h0M845 339h0M769 335h0M739 356h0M884 358h0M844 357h0M696 340h0M764 356h0M859 330h0M941 338h0M892 360h0M841 338h0M801 339h0M811 359h0M908 338h0M726 337h0M878 339h0M845 336h0M859 359h0M751 356h0M904 336h0M948 356h0M846 357h0M883 340h0M739 358h0M768 340h0M887 339h0M874 359h0M798 340h0M774 340h0M720 356h0M754 336h0M758 355h0M934 357h0M723 358h0M812 358h0M765 357h0M916 356h0M924 339h0M937 335h0M722 407h0M712 409h0M942 390h0M753 410h0M852 389h0M755 383h0M905 408h0M924 408h0M817 406h0M706 407h0M775 409h0M835 389h0M827 391h0M694 390h0M845 408h0M863 384h0M829 391h0M944 420h0M819 408h0M911 408h0M706 408h0M769 412h0M880 391h0M729 387h0M938 411h0M921 408h0M821 389h0M914 390h0M794 406h0M928 411h0M790 391h0M898 407h0M930 387h0M772 407h0M725 391h0M819 406h0M881 387h0M701 409h0M695 409h0M766 386h0M918 391h0M861 408h0M851 409h0M856 387h0M796 389h0M868 391h0M716 408h0M931 409h0M806 413h0M794 384h0M818 413h0M785 410h0M868 410h0M914 409h0M749 408h0M878 391h0M711 390h0M695 407h0M867 407h0M872 388h0M888 408h0M884 407h0M820 390h0M943 389h0M877 412h0M809 407h0M911 388h0M784 387h0M811 390h0M698 389h0M915 390h0M846 412h0M867 406h0M708 410h0M849 382h0M835 408h0M802 409h0M779 384h0M716 391h0M951 390h0M779 391h0M875 391h0M859 409h0M915 407h0M865 407h0M831 386h0M921 389h0M876 407h0M755 407h0M758 388h0M778 391h0M698 407h0M752 407h0M889 408h0M710 407h0M771 407h0M766 390h0M728 409h0M728 406h0M882 407h0M695 391h0M718 389h0M769 391h0M872 408h0M829 388h0M840 389h0M784 409h0M820 388h0M742 391h0M753 411h0M717 391h0M751 406h0M935 408h0M809 391h0M771 409h0M884 390h0M793 406h0M769 390h0M919 387h0M916 407h0M850 389h0M768 408h0M819 408h0M778 408h0M885 388h0M789 388h0M935 407h0M786 408h0M705 407h0M711 407h0M692 384h0M836 388h0M755 388h0M914 384h0M841 411h0M746 406h0M931 407h0M718 391h0M826 390h0M889 391h0M903 391h0M763 408h0M764 389h0M832 391h0M905 391h0M834 408h0M795 407h0M813 408h0M715 410h0M742 389h0M861 391h0M718 411h0M763 410h0M867 409h0M903 391h0M882 411h0M952 387h0M809 383h0M823 391h0M878 389h0M952 407h0M766 386h0M913 409h0M758 409h0M895 390h0M953 390h0M747 406h0M727 409h0M710 409h0M787 386h0M840 391h0M794 407h0M927 386h0M704 409h0M825 407h0M774 386h0M814 407h0M700 410h0M739 407h0M803 408h0M843 390h0M754 390h0M848 408h0M732 391h0M770 388h0M826 407h0M920 390h0M763 388h0M861 380h0M789 408h0M847 407h0M841 410h0M913 414h0M693 410h0M825 408h0M856 389h0M748 408h0M895 408h0M704 390h0M763 389h0M939 409h0M774 390h0M742 411h0M703 391h0M878 408h0M836 407h0M879 407h0M698 387h0M752 406h0M769 391h0M873 391h0M697 389h0M763 387h0M904 389h0M735 414h0M930 410h0M818 389h0M850 408h0M794 387h0M787 410h0M844 408h0M891 410h0M770 391h0M916 388h0M728 407h0M813 389h0M710 410h0M737 406h0M839 407h0M762 407h0M731 408h0M822 391h0M952 391h0M795 408h0M832 389h0M728 407h0M804 407h0M788 407h0M714 390h0M826 407h0M752 409h0M945 406h0M854 390h0M710 408h0M716 408h0M882 406h0M925 387h0M821 388h0M929 389h0M790 383h0M784 413h0M876 387h0M786 389h0M914 408h0M846 408h0M821 389h0M828 389h0M934 389h0M865 407h0M935 407h0M718 390h0M784 390h0M710 411h0M926 406h0M740 390h0M915 411h0M818 407h0M873 390h0M808 409h0M729 411h0M723 385h0M883 385h0M878 386h0M823 389h0M884 408h0M873 389h0M901 390h0M712 406h0M792 407h0M765 387h0M747 407h0M790 390h0M856 388h0M829 411h0M926 407h0M803 412h0M830 390h0M808 412h0M836 389h0M702 390h0M709 408h0M705 387h0M872 409h0M885 389h0M867 387h0M919 414h0M949 391h0M869 390h0M778 409h0M698 415h0M899 389h0M716 388h0M779 407h0M888 381h0M806 408h0M705 410h0M814 408h0M855 389h0M920 409h0M814 408h0M774 408h0M877 407h0M928 391h0M693 386h0M837 391h0M826 407h0M853 407h0M852 390h0M923 390h0M708 390h0M827 391h0M866 408h0M733 411h0M912 387h0M699 391h0M844 384h0M784 391h0M745 411h0M874 388h0M907 390h0M720 411h0M926 406h0M720 409h0M836 409h0M943 391h0M750 410h0M918 414h0M826 411h0M715 391h0M934 410h0M929 411h0M892 390h0M869 407h0M896 410h0M848 386h0M797 413h0M701 407h0M779 390h0M941 409h0M923 387h0M785 407h0M920 388h0M930 387h0M759 384h0M697 388h0M850 390h0M896 391h0M821 390h0M793 388h0M858 408h0M942 410h0M862 384h0M755 389h0M762 406h0M891 408h0M941 407h0M883 389h0M756 388h0M817 388h0M704 414h0M770 416h0M900 389h0M902 385h0M768 407h0M756 391h0M842 409h0M720 408h0M849 410h0M942 390h0M872 390h0M787 390h0M912 412h0M910 410h0M819 388h0M714 409h0M823 391h0M795 407h0M758 391h0M953 408h0M696 410h0M928 411h0M899 386h0M766 411h0M750 385h0M758 389h0M771 409h0M696 412h0M696 410h0M831 387h0M850 390h0M830 407h0M709 407h0M714 409h0M915 391h0M862 413h0M823 409h0M859 390h0M928 387h0M773 388h0M807 407h0M832 389h0M803 408h0M798 389h0M718 385h0M901 409h0M919 389h0M904 409h0M813 408h0M896 410h0M853 406h0M901 390h0M897 407h0M777 389h0M748 383h0M740 389h0M931 408h0M889 387h0M855 389h0M851 408h0M865 410h0M879 390h0M770 388h0M769 406h0M809 406h0M691 391h0M697 407h0M817 389h0M861 413h0M838 406h0M696 407h0M740 410h0M798 410h0M827 407h0M881 408h0M758 390h0M801 408h0M799 408h0M780 386h0M742 408h0M753 407h0M755 406h0M722 409h0M885 407h0M816 386h0M811 388h0M944 407h0M809 388h0M755 387h0M838 407h0M921 387h0M769 407h0M713 389h0M924 385h0M807 390h0M919 407h0M951 390h0M912 406h0M922 389h0M861 385h0M691 408h0M709 407h0M694 407h0M928 388h0M782 408h0M873 413h0M806 411h0M767 381h0M864 391h0M881 390h0M874 407h0M790 410h0M863 407h0M821 389h0M917 407h0M761 386h0M851 408h0M731 390h0M732 388h0M729 406h0M907 388h0M700 409h0M920 408h0M777 380h0M915 408h0M762 408h0M765 390h0M694 409h0M894 413h0M798 389h0M695 407h0M820 391h0M935 414h0M884 409h0M731 411h0M817 412h0M740 389h0M706 407h0M887 389h0M774 408h0M713 385h0M749 410h0M758 408h0M924 407h0M917 387h0M834 406h0M806 383h0M830 407h0M927 408h0M747 408h0M773 390h0M950 410h0M897 386h0M714 406h0M949 410h0M692 389h0M752 410h0M946 389h0M934 407h0M935 390h0M770 385h0M901 391h0M932 390h0M760 386h0M925 407h0M811 408h0M815 406h0M739 388h0M715 409h0M820 410h0M878 411h0M876 388h0M835 389h0M785 389h0M740 387h0M752 412h0M719 389h0M807 409h0M779 389h0M928 409h0M905 389h0M722 407h0M898 408h0M751 410h0M836 407h0M755 408h0M785 409h0M907 407h0M751 385h0M854 391h0M723 391h0M798 412h0M900 411h0M940 388h0M759 411h0M860 389h0M836 408h0M889 391h0M840 410h0M841 407h0M812 407h0M791 391h0M770 409h0M741 411h0M768 387h0M911 411h0M851 410h0M736 390h0M914 387h0M691 386h0M837 389h0M819 406h0M839 390h0M952 387h0M894 411h0M758 409h0M792 407h0M846 384h0M776 390h0M695 406h0M898 408h0M896 391h0M951 410h0M770 408h0M822 389h0M883 390h0M801 411h0M887 408h0M897 409h0M738 391h0M909 388h0M927 391h0M948 391h0M869 391h0M889 391h0M703 411h0M725 382h0M763 408h0M802 390h0M807 408h0M760 409h0M895 389h0M818 412h0M758 390h0M878 416h0M912 411h0M856 406h0M699 391h0M702 408h0M945 389h0M899 406h0M850 387h0M797 410h0M772 406h0M879 407h0M721 382h0M915 386h0M852 389h0M802 388h0M875 413h0M887 386h0M929 406h0M704 386h0M925 407h0M847 391h0M809 390h0M787 389h0M942 384h0M707 409h0M864 409h0M812 411h0M946 414h0M784 389h0M853 390h0M743 389h0M803 386h0M749 385h0M730 410h0M915 407h0M820 389h0M876 412h0M838 461h0M758 460h0M724 459h0M849 440h0M698 459h0M710 443h0M885 458h0M924 442h0M713 439h0M814 463h0M778 441h0M833 439h0M766 460h0M920 440h0M876 442h0M870 459h0M803 462h0M916 466h0M789 459h0M945 442h0M781 471h0M798 442h0M707 459h0M890 460h0M908 459h0M850 441h0M737 442h0M833 458h0M889 460h0M805 442h0M941 440h0M802 461h0M933 442h0M749 466h0M736 459h0M736 443h0M748 462h0M808 438h0M743 439h0M763 443h0M878 442h0M794 461h0M894 458h0M711 459h0M792 438h0M766 442h0M803 460h0M925 462h0M699 460h0M903 443h0M948 462h0M899 459h0M800 464h0M783 458h0M723 459h0M915 462h0M891 459h0M879 460h0M819 460h0M777 437h0M913 460h0M827 459h0M712 462h0M895 459h0M919 460h0M834 459h0M855 439h0M767 443h0M722 464h0M852 440h0M908 442h0M722 442h0M921 468h0M811 442h0M795 458h0M695 442h0M857 441h0M709 458h0M726 460h0M699 467h0M768 438h0M770 440h0M813 443h0M707 460h0M767 441h0M708 441h0M743 459h0M806 458h0M774 441h0M816 442h0M878 460h0M876 435h0M852 443h0M694 464h0M862 441h0M921 440h0M916 442h0M869 437h0M736 441h0M799 440h0M861 459h0M944 459h0M857 441h0M919 463h0M907 466h0M707 461h0M920 459h0M898 464h0M876 460h0M697 459h0M909 442h0M827 436h0M717 465h0M793 433h0M799 438h0M709 443h0M770 460h0M918 439h0M855 460h0M944 442h0M768 458h0M856 443h0M910 459h0M767 459h0M868 442h0M696 440h0M949 442h0M818 440h0M796 464h0M810 442h0M737 442h0M827 443h0M755 443h0M832 459h0M827 460h0M734 443h0M752 442h0M766 460h0M747 441h0M727 443h0M757 459h0M792 443h0M763 442h0M938 442h0M748 462h0M891 460h0M714 460h0M707 443h0M914 459h0M694 462h0M849 458h0M847 442h0M794 463h0M713 439h0M778 440h0M721 459h0M859 460h0M803 441h0M708 462h0M752 458h0M909 459h0M896 442h0M911 462h0M801 440h0M861 442h0M842 462h0M908 460h0M808 443h0M785 458h0M750 458h0M756 440h0M817 458h0M721 459h0M714 442h0M893 459h0M809 461h0M769 442h0M841 440h0M786 443h0M717 461h0M921 462h0M700 442h0M741 441h0M849 443h0M816 442h0M947 439h0M916 440h0M900 439h0M754 461h0M924 442h0M804 441h0M866 441h0M804 461h0M867 459h0M749 442h0M947 440h0M799 458h0M701 440h0M772 438h0M798 439h0M919 443h0M932 461h0M893 441h0M784 441h0M729 443h0M849 459h0M801 459h0M763 434h0M693 438h0M949 458h0M695 459h0M751 459h0M722 463h0M801 460h0M741 461h0M828 462h0M723 459h0M915 438h0M927 439h0M792 441h0M718 459h0M722 437h0M831 443h0M923 441h0M820 434h0M774 436h0M781 438h0M934 465h0M778 441h0M713 440h0M737 460h0M866 439h0M719 443h0M860 442h0M724 460h0M843 441h0M878 440h0M819 441h0M823 438h0M933 458h0M695 459h0M888 441h0M893 442h0M730 441h0M771 441h0M807 439h0M819 467h0M779 461h0M861 441h0M792 443h0M807 439h0M848 459h0M815 441h0M803 441h0M736 458h0M945 461h0M739 442h0M868 459h0M877 440h0M711 443h0M895 458h0M767 461h0M831 459h0M928 460h0M813 460h0M712 438h0M929 436h0M860 442h0M843 439h0M904 458h0M935 442h0M844 443h0M714 437h0M920 442h0M815 441h0M697 439h0M766 440h0M812 440h0M901 442h0M872 459h0M746 458h0M876 442h0M849 467h0M757 461h0M809 437h0M705 461h0M782 462h0M757 461h0M754 438h0M915 462h0M731 460h0M902 443h0M863 443h0M889 461h0M909 441h0M804 466h0M806 442h0M693 438h0M765 458h0M815 441h0M843 439h0M807 443h0M768 439h0M940 463h0M882 441h0M947 443h0M914 440h0M779 439h0M892 459h0M804 458h0M698 461h0M876 459h0M760 443h0M740 459h0M799 441h0M786 461h0M897 443h0M789 462h0M935 443h0M726 442h0M930 458h0M764 462h0M733 459h0M813 464h0M704 439h0M846 442h0M839 443h0M827 459h0M835 463h0M914 460h0M719 461h0M831 441h0M895 439h0M786 460h0M918 439h0M786 462h0M907 465h0M875 441h0M696 460h0M923 462h0M768 438h0M935 464h0M801 458h0M797 437h0M761 442h0M707 465h0M762 460h0M826 460h0M746 462h0M700 458h0M917 442h0M694 442h0M856 441h0M747 460h0M707 439h0M787 439h0M730 461h0M942 438h0M848 440h0M898 441h0M908 443h0M774 458h0M921 461h0M691 443h0M839 459h0M940 435h0M951 443h0M820 461h0M840 440h0M933 461h0M864 440h0M718 442h0M767 442h0M820 443h0M819 458h0M947 442h0M697 439h0M868 438h0M735 442h0M844 442h0M868 440h0M807 460h0M810 436h0M823 459h0M737 443h0M802 459h0M912 441h0M857 467h0M827 440h0M881 460h0M711 443h0M919 443h0M875 460h0M871 460h0M883 459h0M761 439h0M748 460h0M828 440h0M721 442h0M879 459h0M800 461h0M865 439h0M855 458h0M839 442h0M703 459h0M870 464h0M907 463h0M729 442h0M724 440h0M887 441h0M752 461h0M697 460h0M749 460h0M923 442h0M694 442h0M751 460h0M824 464h0M936 464h0M932 443h0M787 435h0M869 441h0M718 440h0M842 460h0M849 458h0M756 440h0M939 459h0M791 460h0M906 469h0M836 459h0M937 463h0M863 459h0M733 443h0M730 440h0M921 459h0M775 461h0M753 439h0M866 459h0M766 461h0M916 440h0M890 442h0M797 458h0M919 443h0M900 435h0M896 435h0M899 439h0M718 439h0M724 440h0M896 459h0M884 459h0M950 441h0M771 459h0M762 460h0M822 458h0M939 464h0M874 442h0M920 459h0M814 438h0M922 460h0M742 460h0M939 460h0M925 441h0M949 458h0M919 462h0M735 443h0M881 441h0M721 436h0M934 461h0M717 459h0M847 460h0M887 441h0M855 461h0M947 442h0M908 461h0M866 442h0M792 465h0M732 463h0M845 461h0M910 460h0M860 443h0M865 459h0M928 460h0M810 462h0M912 462h0M866 460h0M798 462h0M879 443h0M742 441h0M716 434h0M874 462h0M697 459h0M696 443h0M935 441h0M797 458h0M763 439h0M927 439h0M882 458h0M749 458h0M871 458h0M752 443h0M836 464h0M860 441h0M850 443h0M700 438h0M882 441h0M785 433h0M731 439h0M951 461h0M815 460h0M723 459h0M953 460h0M888 461h0M792 460h0M819 460h0M823 465h0M821 458h0M750 437h0M836 433h0M810 458h0M852 462h0M801 459h0M717 435h0M764 440h0M807 458h0M858 459h0M855 435h0M797 439h0M778 459h0M953 440h0M839 459h0M753 460h0M763 459h0M879 438h0M940 459h0M948 443h0M758 459h0M893 440h0M889 462h0M773 443h0M794 459h0M869 459h0M853 442h0M780 463h0M774 459h0M824 458h0M752 443h0M744 461h0M775 466h0M882 440h0M950 438h0M937 439h0M946 461h0M837 460h0M749 458h0M700 442h0M859 443h0M749 459h0M786 460h0M862 458h0M851 460h0M734 440h0M710 439h0M727 459h0M741 441h0M857 437h0M938 441h0M859 461h0M919 443h0M890 460h0M739 461h0M875 458h0M735 442h0M869 459h0M871 460h0M740 459h0M772 442h0M894 442h0M712 442h0M735 439h0M700 443h0M820 443h0M780 442h0M947 459h0M928 461h0M802 459h0M859 461h0M707 442h0M697 442h0M909 460h0M901 461h0M854 441h0M916 460h0M760 437h0M857 442h0M769 462h0M751 464h0M798 442h0M717 459h0M694 436h0M931 461h0M822 459h0M815 461h0M843 439h0M801 459h0M717 439h0M817 458h0M940 442h0M827 441h0M877 459h0M893 460h0M897 440h0M927 459h0M815 442h0M928 461h0M762 442h0M826 430h0M952 442h0M904 440h0M771 443h0M850 441h0M810 439h0M833 460h0M841 458h0M943 433h0M759 459h0M811 433h0M857 440h0M939 458h0M773 459h0M893 462h0M719 461h0M929 442h0M745 460h0M833 460h0M860 460h0M808 460h0M886 464h0M852 458h0M731 441h0M716 464h0M811 458h0M910 442h0M900 461h0M813 461h0M933 440h0M725 439h0M850 435h0M934 443h0M944 443h0M935 460h0M834 441h0M691 490h0M800 508h0M827 489h0M936 488h0M943 488h0M726 508h0M923 490h0M781 507h0M836 507h0M923 492h0M890 511h0M692 507h0M749 509h0M938 511h0M798 510h0M752 490h0M922 490h0M886 491h0M732 507h0M821 507h0M781 508h0M858 510h0M695 507h0M887 490h0M736 491h0M941 508h0M875 492h0M750 508h0M813 514h0M733 491h0M792 491h0M727 482h0M948 491h0M897 507h0M866 513h0M764 511h0M948 490h0M947 507h0M896 491h0M863 510h0M877 507h0M746 511h0M745 489h0M780 490h0M799 485h0M832 509h0M912 490h0M865 489h0M836 508h0M754 508h0M752 487h0M822 491h0M880 490h0M938 487h0M843 509h0M890 489h0M763 491h0M862 508h0M792 510h0M871 491h0M893 507h0M944 492h0M903 509h0M879 491h0M944 491h0M769 492h0M728 511h0M939 508h0M900 489h0M798 514h0M788 507h0M903 491h0M892 491h0M713 487h0M768 486h0M773 508h0M867 490h0M705 511h0M840 490h0M923 510h0M822 508h0M744 490h0M853 510h0M767 510h0M937 508h0M776 508h0M880 514h0M919 508h0M836 491h0M742 489h0M699 492h0M884 486h0M799 508h0M741 491h0M775 490h0M836 487h0M939 510h0M833 513h0M848 518h0M691 509h0M695 489h0M706 486h0M720 507h0M751 490h0M757 511h0M836 488h0M876 508h0M718 488h0M797 490h0M802 487h0M811 507h0M893 489h0M898 507h0M762 508h0M841 489h0M932 508h0M844 491h0M737 508h0M731 508h0M841 509h0M807 487h0M753 507h0M929 512h0M739 491h0M863 487h0M784 492h0M826 507h0M753 508h0M929 511h0M825 507h0M917 515h0M916 485h0M747 487h0M797 509h0M884 489h0M698 491h0M807 490h0M740 509h0M693 509h0M803 492h0M917 491h0M726 508h0M941 491h0M738 491h0M702 508h0M694 492h0M919 491h0M836 507h0M694 508h0M947 492h0M941 509h0M912 510h0M920 492h0M788 507h0M951 509h0M912 485h0M872 513h0M799 490h0M824 509h0M886 490h0M765 486h0M712 491h0M946 491h0M780 492h0M842 492h0M876 508h0M913 485h0M820 511h0M829 514h0M907 509h0M748 507h0M927 491h0M735 490h0M878 488h0M717 507h0M890 508h0M948 489h0M791 510h0M876 491h0M772 510h0M898 510h0M812 491h0M792 508h0M910 507h0M703 492h0M692 513h0M817 509h0M810 492h0M867 509h0M950 491h0M753 492h0M868 507h0M798 490h0M850 511h0M939 490h0M949 514h0M902 513h0M761 510h0M872 491h0M918 491h0M878 487h0M900 490h0M781 513h0M933 510h0M943 508h0M778 512h0M922 490h0M781 507h0M737 513h0M866 491h0M796 507h0M871 486h0M779 510h0M928 492h0M932 489h0M752 487h0M821 492h0M938 508h0M693 490h0M691 488h0M717 508h0M693 491h0M818 492h0M935 514h0M836 508h0M941 490h0M801 511h0M788 512h0M745 509h0M770 490h0M944 515h0M707 492h0M716 491h0M906 489h0M872 507h0M792 510h0M829 509h0M759 508h0M901 511h0M700 509h0M718 509h0M740 515h0M939 490h0M766 508h0M884 491h0M736 511h0M742 512h0M713 510h0M776 492h0M916 491h0M829 487h0M784 491h0M839 513h0M776 509h0M694 491h0M948 508h0M864 487h0M811 484h0M718 483h0M803 511h0M942 510h0M819 509h0M813 487h0M806 511h0M860 508h0M900 511h0M768 510h0M840 507h0M757 507h0M932 508h0M868 512h0M868 509h0M784 510h0M923 507h0M709 492h0M760 487h0M932 509h0M709 489h0M729 507h0M867 507h0M765 487h0M781 509h0M808 490h0M708 491h0M932 511h0M735 491h0M815 507h0M932 509h0M783 491h0M891 512h0M930 485h0M882 490h0M862 509h0M715 508h0M728 492h0M859 508h0M892 491h0M740 508h0M744 509h0M938 508h0M838 508h0M895 509h0M739 511h0M809 492h0M867 488h0M881 492h0M890 510h0M760 490h0M717 508h0M744 510h0M876 487h0M939 490h0M762 491h0M866 513h0M716 492h0M700 507h0M757 490h0M926 508h0M908 492h0M724 492h0M873 510h0M742 490h0M889 508h0M904 509h0M915 508h0M857 490h0M720 507h0M765 507h0M697 508h0M873 491h0M927 490h0M945 488h0M763 510h0M755 514h0M940 507h0M907 491h0M825 507h0M745 489h0M877 492h0M698 487h0M704 513h0M832 491h0M723 489h0M759 510h0M927 508h0M825 485h0M739 491h0M754 508h0M851 491h0M873 491h0M871 490h0M724 490h0M917 513h0M792 491h0M869 511h0M792 492h0M932 491h0M775 508h0M711 509h0M820 512h0M753 491h0M789 491h0M932 510h0M926 492h0M917 491h0M888 492h0M709 487h0M794 492h0M892 490h0M694 507h0M829 490h0M929 491h0M714 509h0M941 490h0M733 508h0M859 510h0M913 492h0M942 509h0M893 487h0M804 489h0M817 485h0M701 511h0M762 510h0M759 490h0M762 509h0M867 512h0M867 512h0M930 487h0M798 491h0M868 491h0M742 487h0M897 491h0M766 511h0M893 508h0M816 509h0M704 507h0M737 489h0M792 491h0M920 488h0M875 491h0M850 510h0M853 507h0M888 490h0M789 489h0M794 492h0M837 492h0M717 514h0M950 492h0M746 487h0M735 492h0M781 488h0M788 491h0M914 508h0M738 508h0M868 508h0M945 508h0M757 509h0M938 508h0M835 487h0M822 490h0M704 492h0M753 491h0M921 512h0M843 507h0M918 492h0M882 490h0M810 510h0M912 490h0M914 507h0M776 490h0M815 508h0M708 508h0M844 488h0M857 488h0M769 511h0M769 487h0M734 488h0M716 491h0M896 513h0M753 511h0M927 490h0M948 492h0M785 491h0M837 511h0M890 507h0M721 490h0M758 490h0M741 487h0M915 489h0M721 507h0M705 491h0M734 508h0M695 511h0M812 510h0M724 514h0M926 491h0M852 489h0M772 490h0M849 489h0M774 489h0M728 510h0M838 511h0M895 486h0M718 508h0M801 492h0M693 511h0M720 486h0M889 509h0M824 486h0M831 510h0M809 512h0M709 491h0M769 509h0M850 509h0M732 507h0M946 491h0M836 509h0M876 490h0M912 508h0M738 507h0M816 508h0M698 515h0M752 491h0M924 508h0M820 511h0M779 508h0M768 492h0M702 507h0M834 512h0M907 510h0M798 516h0M704 485h0M717 509h0M938 514h0M827 489h0M930 508h0M781 510h0M921 489h0M776 512h0M722 489h0M930 507h0M826 511h0M723 491h0M876 492h0M779 490h0M774 508h0M869 492h0M889 510h0M919 492h0M750 488h0M821 491h0M946 492h0M886 510h0M831 507h0M720 509h0M823 508h0M772 511h0M755 511h0M812 517h0M772 509h0M769 509h0M730 490h0M712 491h0M896 491h0M861 491h0M835 511h0M849 489h0M900 512h0M746 508h0M800 507h0M831 491h0M820 489h0M887 492h0M743 507h0M860 490h0M792 508h0M706 507h0M762 492h0M738 491h0M807 487h0M693 491h0M946 491h0M820 490h0M890 490h0M780 491h0M728 490h0M831 510h0M748 509h0M721 508h0M817 509h0M951 488h0M738 488h0M830 510h0M802 507h0M834 512h0M703 492h0M751 511h0M951 511h0M795 509h0M817 513h0M931 508h0M930 485h0M763 491h0M884 508h0M772 508h0M852 491h0M826 509h0M826 508h0M911 491h0M873 487h0M917 510h0M721 507h0M940 517h0M827 491h0M758 508h0M797 514h0M744 490h0M906 507h0M752 489h0M863 507h0M781 508h0M692 489h0M788 490h0M942 508h0M827 510h0M930 492h0M798 510h0M929 510h0M839 508h0M775 507h0M940 489h0M712 487h0M832 487h0M788 489h0M772 508h0M784 491h0M775 510h0M824 491h0M818 488h0M939 507h0M848 512h0M885 490h0M717 492h0M846 511h0M721 492h0M876 490h0M778 491h0M888 489h0M738 508h0M854 508h0M906 491h0M882 492h0M807 488h0M898 511h0M792 508h0M939 512h0M920 489h0M735 492h0M898 489h0M879 488h0M712 491h0M701 488h0M951 513h0M927 508h0M834 490h0M722 489h0M923 509h0M758 510h0M894 491h0M843 489h0M864 489h0M887 507h0M746 510h0M870 492h0M694 488h0M840 487h0M788 491h0M937 509h0M775 491h0M711 490h0M868 514h0M941 511h0M833 510h0M721 488h0M858 511h0M843 489h0M736 511h0M701 490h0M915 509h0M719 491h0" stroke="#d9561c" stroke-width="2.2" stroke-linecap="square" fill="none"/>
  <rect x="691" y="346.8" width="262" height="2" fill="#f5b840"/>
  <rect x="691" y="397.7" width="262" height="2" fill="#f5b840"/>
  <rect x="691" y="449.5" width="262" height="2" fill="#f5b840"/>
  <rect x="691" y="498.5" width="262" height="2" fill="#f5b840"/>
 </g>
 <rect x="690" y="310" width="289.5" height="228.5" fill="none" stroke="#333" stroke-width="0.8"/>
 <path d="M690.0 538.5v-2.5M690.0 310v2.5M722.2 538.5v-2.5M722.2 310v2.5M754.3 538.5v-2.5M754.3 310v2.5M786.5 538.5v-2.5M786.5 310v2.5M818.7 538.5v-2.5M818.7 310v2.5M850.8 538.5v-2.5M850.8 310v2.5M883.0 538.5v-2.5M883.0 310v2.5M915.2 538.5v-2.5M915.2 310v2.5M947.3 538.5v-2.5M947.3 310v2.5M979.5 538.5v-2.5M979.5 310v2.5M690 310.0h2.5M979.5 310.0h-2.5M690 348.1h2.5M979.5 348.1h-2.5M690 386.2h2.5M979.5 386.2h-2.5M690 424.2h2.5M979.5 424.2h-2.5M690 462.3h2.5M979.5 462.3h-2.5M690 500.4h2.5M979.5 500.4h-2.5M690 538.5h2.5M979.5 538.5h-2.5" stroke="#333" stroke-width="0.8" fill="none"/>
 <g font-family="Liberation Sans" font-size="8.5" fill="#333"><text x="686" y="313.0" text-anchor="end">1.5</text><text x="686" y="351.1" text-anchor="end">1</text><text x="686" y="389.2" text-anchor="end">0.5</text><text x="686" y="427.2" text-anchor="end">0</text><text x="686" y="465.3" text-anchor="end">-0.5</text><text x="686" y="503.4" text-anchor="end">-1</text><text x="686" y="541.5" text-anchor="end">-1.5</text><text x="690.0" y="551" text-anchor="middle">0</text><text x="722.2" y="551" text-anchor="middle">2000</text><text x="754.3" y="551" text-anchor="middle">4000</text><text x="786.5" y="551" text-anchor="middle">6000</text><text x="818.7" y="551" text-anchor="middle">8000</text><text x="850.8" y="551" text-anchor="middle">10000</text><text x="883.0" y="551" text-anchor="middle">12000</text><text x="915.2" y="551" text-anchor="middle">14000</text><text x="947.3" y="551" text-anchor="middle">16000</text><text x="979.5" y="551" text-anchor="middle">18000</text></g>
 <text x="835" y="305" text-anchor="middle" font-family="Liberation Sans" font-size="10" font-weight="bold" fill="#111">Symbols after EQ processing</text>
 <text x="835" y="565" text-anchor="middle" font-family="Liberation Sans" font-size="10" fill="#333">Symbols</text>
 <rect x="881.5" y="317.5" width="90.5" height="34" fill="#fff" stroke="#777" stroke-width="0.6"/>
 <g font-family="Liberation Sans" font-size="7.6" fill="#222">
  <text x="913" y="327">Noisy signal</text><text x="913" y="337.5">Noiseless signal</text><text x="913" y="348.5">Pilot</text>
 </g>
 <circle cx="898" cy="324.5" r="1" fill="#3b85c2"/><circle cx="898" cy="335" r="1" fill="#d9541a"/><circle cx="898" cy="346" r="1" fill="#f2b13a"/>
</svg>
<!-- measurement table -->
<div class="a" style="left:240px;top:474px;width:392px;height:23px;background:#151518"></div>
<div class="a" style="left:240px;top:475px;width:392px;height:2px;background:#5a5a5e"></div>
<div class="a" style="left:622px;top:478px;width:16px;height:16px;border-radius:50%;border:1px solid #4a4a4e"></div>
<div class="a" style="left:632px;top:470px;width:5px;height:30px;background:#dcd88c"></div>
<div class="a" style="left:240px;top:496px;width:392px;height:80px;background:#1a1a1e;border-top:1px solid #5a5a5e"></div>
<div class="a" style="left:240px;top:497px;width:392px;height:14px;background:#1e1e22"></div>
<div class="a" style="left:240px;top:535px;width:392px;height:12px;background:#1b1b1f"></div>
<div class="a" style="left:240px;top:547px;width:392px;height:15px;background:#28282c"></div>
<div class="a" style="left:240px;top:562px;width:392px;height:13px;background:#1b1b1f"></div>
<div class="a" style="left:240px;top:575px;width:392px;height:1px;background:#6a6a6e"></div>
<div class="a" style="left:376px;top:499px;width:1px;height:12px;background:#4a4a4e"></div>
<div class="a" style="left:437px;top:499px;width:1px;height:12px;background:#4a4a4e"></div>
<div class="a" style="left:496px;top:499px;width:1px;height:12px;background:#4a4a4e"></div>
<div class="a" style="left:556px;top:499px;width:1px;height:12px;background:#4a4a4e"></div>
<div class="a" style="left:615px;top:499px;width:1px;height:12px;background:#4a4a4e"></div>
<!-- pink highlight box -->
<div class="a" style="left:239px;top:511px;width:379px;height:24px;border:5px solid #c96394;background:#1f2327"></div>
<!-- header text -->
<div class="cell" style="left:246px;top:504px;color:#d8d8d8;font-size:8.5px">Measurement</div>
<div class="cell" style="left:380px;top:504px;width:54px;text-align:right;color:#d8d8d8;font-size:8.5px">Current</div>
<div class="cell" style="left:440px;top:504px;width:53px;text-align:right;color:#d8d8d8;font-size:8.5px">Minimum</div>
<div class="cell" style="left:499px;top:504px;width:54px;text-align:right;color:#d8d8d8;font-size:8.5px">Maximum</div>
<div class="cell" style="left:559px;top:504px;width:53px;text-align:right;color:#d8d8d8;font-size:8.5px">Count</div>
<!-- rows -->
<div class="cell" style="left:246px;top:519px;font-size:8.5px;color:#eee">TDECQ</div>
<div class="badge" style="left:361px;top:519px;background:#c41e4e;color:#fff">F2</div>
<div class="cell" style="left:380px;top:519px;width:54px;text-align:right;color:#6e6e72;font-size:7.5px">SERY</div>
<div class="a" style="left:472px;top:523px;width:22px;height:1px;background:#aaa"></div>
<div class="a" style="left:531px;top:523px;width:22px;height:1px;background:#aaa"></div>
<div class="cell" style="left:559px;top:519px;width:53px;text-align:right;color:#8a8a8e;font-size:8px">0</div>

<div class="cell" style="left:246px;top:535px;font-size:8.5px;color:#eee">Average Power</div>
<div class="badge" style="left:361px;top:535px;background:#3a78c4;color:#0c2a55">1A</div>
<div class="cell" style="left:380px;top:535px;width:54px;text-align:right;color:#7aaae0;font-size:8px">1.56 dBm</div>
<div class="cell" style="left:440px;top:535px;width:53px;text-align:right;color:#7aaae0;font-size:8px">1.55 dBm</div>
<div class="cell" style="left:499px;top:535px;width:54px;text-align:right;color:#7aaae0;font-size:8px">1.57 dBm</div>
<div class="cell" style="left:559px;top:535px;width:53px;text-align:right;color:#7aaae0;font-size:8px">146</div>

<div class="cell" style="left:246px;top:550px;font-size:8.5px;color:#eee">Outer ER</div>
<div class="badge" style="left:361px;top:550px;background:#b4ac3c;color:#2a2a10">F1</div>
<div class="cell" style="left:380px;top:550px;width:54px;text-align:right;color:#8a8a8e;font-size:8px">? 4.084 dB</div>
<div class="cell" style="left:440px;top:550px;width:53px;text-align:right;color:#8a8a8e;font-size:8px">? 4.084 dB</div>
<div class="cell" style="left:499px;top:550px;width:54px;text-align:right;color:#9ab8e0;font-size:8px">4.869 dB</div>
<div class="cell" style="left:559px;top:550px;width:53px;text-align:right;color:#9ab8e0;font-size:8px">97</div>

<div class="cell" style="left:246px;top:565px;font-size:8.5px;color:#eee">Outer OMA</div>
<div class="badge" style="left:361px;top:564px;background:#b4ac3c;color:#2a2a10">F1</div>
<div class="cell" style="left:376px;top:565px;width:58px;text-align:right;color:#8a8a8e;font-size:8px">? 1.4885 mW</div>
<div class="cell" style="left:436px;top:565px;width:57px;text-align:right;color:#8a8a8e;font-size:8px">? 1.4885 mW</div>
<div class="cell" style="left:499px;top:565px;width:54px;text-align:right;color:#9ab8e0;font-size:8px">1.5175 mW</div>
<div class="cell" style="left:559px;top:565px;width:53px;text-align:right;color:#9ab8e0;font-size:8px">97</div>

<!-- bottom toolbar -->
<div class="a" style="left:240px;top:576px;width:781px;height:25px;background:#1c1c20"></div>
<div class="a" style="left:240px;top:601px;width:781px;height:1px;background:#6a6a6e"></div>
<div class="a" style="left:243px;top:579px;width:17px;height:18px;background:#2a2a2e;border-radius:2px"></div>
<div class="t" style="left:243px;top:580px;width:17px;text-align:center;color:#e01030;font-size:14px;font-weight:bold">✗</div>
<div class="btn" style="left:265px;top:579px;width:32px;height:18px;line-height:16px;font-size:8px;background:#2a2a2e;border-color:#2a2a2e">Details...</div>
<div class="btn" style="left:301px;top:579px;width:30px;height:18px;line-height:16px;font-size:8px;background:#2a2a2e;border-color:#2a2a2e">Limits...</div>
<div class="btn" style="left:334px;top:579px;width:29px;height:18px;line-height:16px;font-size:8px;background:#2a2a2e;border-color:#2a2a2e">Setup...</div>
<div class="a" style="left:921px;top:582px;width:11px;height:10px;background:#fff"></div>
<div class="t" style="left:922px;top:582px;color:#1a8a2a;font-size:10px;font-weight:bold">✓</div>
<div class="t" style="left:936px;top:583px;color:#ddd;font-size:9px"><span class="sx" style="transform:scaleX(0.92)">Annotations</span></div>
<div class="a" style="left:990px;top:580px;width:22px;height:16px;background:#2e2e32;border-radius:2px"></div>
<div class="a" style="left:994px;top:584px;width:14px;height:8px;background:repeating-linear-gradient(90deg,#aaa 0 4px,transparent 4px 5px)"></div>

<!-- status bar -->
<div class="a" style="left:157px;top:602px;width:864px;height:45px;background:linear-gradient(#222226,#0c0c0e 60%,#000)"></div>
<div class="a" style="left:161px;top:605px;width:16px;height:20px;border:1px solid #333;border-radius:4px 0 0 0;background:#141416"></div><div class="a" style="left:161px;top:626px;width:16px;height:20px;border:1px solid #333;border-radius:0 0 0 4px;background:#141416"></div><svg class="a" style="left:166px;top:611px" width="6" height="8"><polygon points="6,0 0,4 6,8" fill="#3a3a3e"/></svg>
<div class="a" style="left:178px;top:605px;width:69px;height:41px;border:1px solid #58585c;border-radius:4px;background:linear-gradient(#202024,#0e0e10)"></div>
<div class="t" style="left:181px;top:607px;width:8px;height:8px;background:#3a78c4;border-radius:1px;color:#fff;font-size:6.5px;font-weight:bold;text-align:center;line-height:8px">A</div>
<div class="t" style="left:191px;top:608px;color:#ddd;font-size:7px">415.5 µW/</div>
<div class="t" style="left:181px;top:627px;width:8px;height:8px;background:#aaa;border-radius:1px;color:#222;font-size:6.5px;font-weight:bold;text-align:center;line-height:8px">C</div>
<div class="t" style="left:191px;top:628px;color:#ddd;font-size:7px">44.3 mV/</div>
<div class="t" style="left:181px;top:636px;width:8px;height:8px;background:#aaa;border-radius:1px;color:#222;font-size:6.5px;font-weight:bold;text-align:center;line-height:8px">D</div>
<div class="t" style="left:191px;top:637px;color:#ddd;font-size:7px">98.6 mV/</div>
<div class="sp" style="left:246px;top:605px;width:70px;height:41px"><div class="sph">Trigger</div><div style="line-height:8px;padding-top:1px">Src: Clock In<br>26.880000 GBd<br>16384</div></div>
<div class="a" style="left:317px;top:605px;width:16px;height:20px;border:1px solid #333;border-radius:0 4px 0 0;background:#141416"></div>
<div class="a" style="left:317px;top:626px;width:16px;height:20px;border:1px solid #333;border-radius:0 0 4px 0;background:#141416"></div>
<div class="t" style="left:318px;top:628px;color:#666;font-size:14px">⚙</div><svg class="a" style="left:322px;top:611px" width="6" height="8"><polygon points="0,0 6,4 0,8" fill="#3a3a3e"/></svg><svg class="a" style="left:305px;top:637px" width="9" height="8"><polygon points="9,0 9,8 0,8" fill="#555"/></svg>

<div class="sp" style="left:721px;top:604px;width:59px;height:42px"><div class="sph">Timebase</div><div style="line-height:9px;padding-top:2px">9.38 ps/<br>Pos: 10.00734 ns</div></div>
<div class="sp" style="left:781px;top:604px;width:70px;height:42px"><div class="sph">Acquisition</div><div style="line-height:9px;padding-top:1px">Full Pattern: On<br>15.98999023 pts/UI<br>Smoothing: Average</div></div>
<div class="sp" style="left:854px;top:604px;width:62px;height:42px"><div class="sph">Frame Trigger</div><div style="line-height:9px;padding-top:1px">Src: Front Panel<br>26.880000 GBd<br>16384 UI</div></div>
<div class="sp" style="left:918px;top:604px;width:31px;height:42px;background:#141416"><div style="height:8px;line-height:8px;color:#3a8a3a;font-size:6px;border-bottom:1px solid #444">Refresh</div><div style="height:8px;line-height:8px;color:#3a8a3a;font-size:6px;position:absolute;bottom:0;width:100%;border-top:1px solid #444">Lock</div></div>
<svg class="a" style="left:928px;top:615px" width="12" height="17"><path d="M2.5 8V5a3.5 3.5 0 0 1 7 0v3" fill="none" stroke="#ccc" stroke-width="1.6"/><rect x="1" y="8" width="10" height="8" fill="#4ab84a"/><rect x="1" y="10" width="10" height="1" fill="#2a7a2a"/><rect x="1" y="13" width="10" height="1" fill="#2a7a2a"/></svg>
<div class="a" style="left:950px;top:608px;width:34px;height:34px;border-radius:50%;border:1px solid #5a5a5e;background:radial-gradient(#1a1a1c,#0a0a0c)"></div>
<svg class="a" style="left:961px;top:611px" width="12" height="6"><polygon points="6,0 12,6 0,6" fill="#aaa"/></svg>
<div class="t" style="left:950px;top:621px;width:34px;text-align:center;color:#e8e8e8;font-size:8px;font-weight:bold;font-style:italic;font-family:'Liberation Serif',serif">Math</div>
<div class="a" style="left:986px;top:608px;width:34px;height:34px;border-radius:50%;border:1px solid #5a5a5e;background:radial-gradient(#1a1a1c,#0a0a0c)"></div>
<svg class="a" style="left:997px;top:611px" width="12" height="6"><polygon points="6,0 12,6 0,6" fill="#aaa"/></svg>
<div class="t" style="left:986px;top:621px;width:34px;text-align:center;color:#e8e8e8;font-size:8px;font-weight:bold;font-style:italic;font-family:'Liberation Serif',serif">Signals</div>
<svg class="a" style="left:0;top:0" width="1200" height="675" viewBox="0 0 1200 675"><path d="M244.5 105.5h6l-6 6z M244.5 291.5h6l-6 6z M638.5 105.5h6l-6 6z" fill="#666"/></svg>
<!-- panel text overlays -->
<div class="t" style="left:247px;top:107px;color:#777;font-size:7px;font-style:italic">10.00734 ns</div>
<div class="a" style="left:414px;top:108px;width:43px;height:14px;border-radius:7px;border:1px solid #2e3e5a;background:#05080f"></div>
<div class="t" style="left:414px;top:112px;width:43px;text-align:center;color:#4a7ab8;font-size:5.5px;font-weight:bold">Channel 1A</div>
<div class="t" style="left:258px;top:116px;color:#fff;font-size:19.5px;letter-spacing:0.69px">980nm VCSEL, T<span style="font-size:15px;position:relative;top:4px">bs</span> = 125°C, ER=5 dB</div>
<div class="t" style="left:247px;top:293px;color:#777;font-size:7px;font-style:italic">10.00734 ns</div>
<div class="t" style="left:313px;top:291px;color:#fff;font-size:19.5px;letter-spacing:0.62px">TDECQ equalizer, 802.3cd</div>
<div class="t" style="left:641px;top:107px;color:#777;font-size:7px;font-style:italic">10.00734 ns</div>
<svg class="a" style="left:766px;top:110px" width="14" height="12"><polygon points="7,0 14,12 0,12" fill="#f0c020"/><rect x="6.3" y="4" width="1.4" height="5" fill="#000"/><rect x="6.3" y="10" width="1.4" height="1.2" fill="#000"/></svg>
<div class="a" style="left:782px;top:107px;width:84px;height:15px;border-radius:7px;border:1px solid #5a5a3a;background:#0a0a05"></div>
<div class="t" style="left:782px;top:111px;width:84px;text-align:center;color:#c8c8a0;font-size:6px;font-weight:bold">F1: OMRC8 Reference[1A]</div>
<div class="t" style="left:716px;top:266px;color:#fff;font-size:19.5px;letter-spacing:0.63px">TDFOM receiver, 802.3cz</div>

<!-- annotations -->
<div class="t" style="left:1039px;top:142px;color:#5c5e2c;font-size:13px;line-height:17px;letter-spacing:0.8px;-webkit-text-stroke:0.25px #5c5e2c">TDFOM receiver is<br>able to deal with<br>non linear ISI</div>
<div class="t" style="left:0;top:379px;width:136px;text-align:right;color:#cc5a92;font-size:13px;line-height:17px;letter-spacing:0.9px;-webkit-text-stroke:0.25px #cc5a92">TDECQ cannot<br>be calculated for<br>the output signal<br>of TDECQ EQ</div>
<!-- KO logo -->
<svg class="a" style="left:1040px;top:560px" width="120" height="85" viewBox="1040 560 120 85">
 <rect x="1050" y="571" width="14" height="64" fill="#fff"/>
 <polygon points="1075.3,571 1103,571 1075.3,598" fill="#fff"/>
 <polygon points="1075.3,609 1103,635 1075.3,635" fill="#fff"/>
 <path fill="#fff" fill-rule="evenodd" d="M1089.7 603.3 L1120.6 572.3 A29 31 0 0 1 1120.6 634.3 Z M1108 603.3 L1126.3 585.2 A11.3 17.6 0 0 1 1126.3 620.5 Z"/>
</svg>
</body></html>
